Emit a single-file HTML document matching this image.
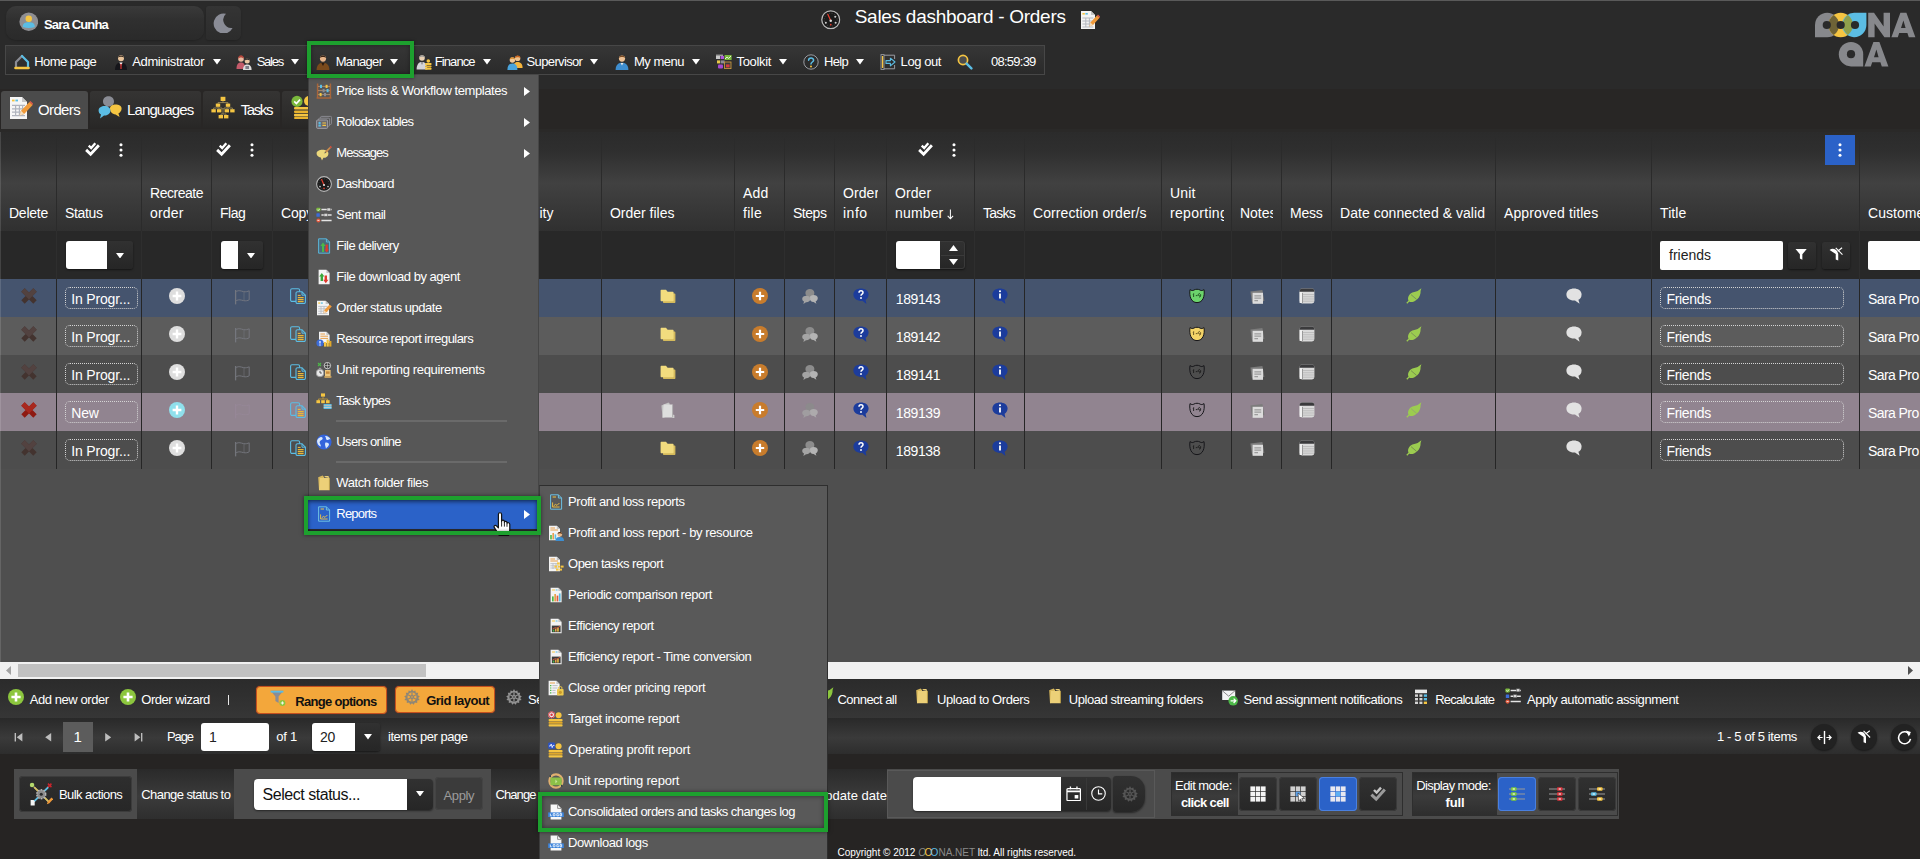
<!DOCTYPE html>
<html><head><meta charset="utf-8"><title>Sales dashboard - Orders</title>
<style>
html,body{margin:0;padding:0;}
body{width:1920px;height:859px;overflow:hidden;background:#2a2a2a;font-family:"Liberation Sans",sans-serif;position:relative;}
#r{position:absolute;left:0;top:0;width:1920px;height:859px;overflow:hidden;}
#r div,#r svg{position:absolute;}
#r div{box-sizing:border-box;}
</style></head><body>
<svg width="0" height="0" style="position:absolute"><defs><symbol id="i-home" viewBox="0 0 16 16"><path d="M2 14V8L8 2" fill="none" stroke="#8a8c94" stroke-width="2.2" stroke-linejoin="round" stroke-linecap="round"/><path d="M8 2L14 8V14" fill="none" stroke="#5bbde4" stroke-width="2.2" stroke-linejoin="round" stroke-linecap="round"/><path d="M1.5 14H14.5" stroke="#f5c542" stroke-width="2.6" stroke-linecap="round"/></symbol><symbol id="i-admin" viewBox="0 0 16 16"><circle cx="8" cy="4.2" r="3" fill="#e8c39a"/><path d="M5 3.6C5 1 11 1 11 3.6C10 2.6 6 2.6 5 3.6Z" fill="#2a2118"/><path d="M2 16C2 10 5 8.4 8 8.4S14 10 14 16Z" fill="#15151a"/><path d="M6.4 8.6L8 12L9.6 8.6Z" fill="#fff"/><path d="M7.6 10L8 15L8.4 10Z" stroke="#c33" stroke-width=".8"/></symbol><symbol id="i-sales" viewBox="0 0 16 16"><circle cx="5" cy="5" r="2.8" fill="#e8b9a0"/><path d="M2 5C2 0 8 0 8 5C7 3 3 3 2 5Z" fill="#b4463c"/><path d="M0.5 15C.5 10 2.5 8.6 5 8.6S9 10 9.5 15Z" fill="#c45a6a"/><circle cx="11.2" cy="7" r="2.5" fill="#ecc8a4"/><path d="M8.8 6.4C8.8 3.4 13.6 3.4 13.6 6.4C12.6 5.4 9.8 5.4 8.8 6.4Z" fill="#2c2c2c"/><path d="M7 16C7 11.6 9 10.4 11.2 10.4S15.6 11.6 15.6 16Z" fill="#dcdcdc"/><rect x="9.4" y="12" width="3.6" height="3" fill="#7c7c86"/></symbol><symbol id="i-manager" viewBox="0 0 16 16"><circle cx="8" cy="4.6" r="3.1" fill="#e6b48a"/><path d="M4.9 4C4.9 .6 11.1 .6 11.1 4C10 2.8 6 2.8 4.9 4Z" fill="#3a2416"/><path d="M1.6 16C1.6 10.4 5 8.8 8 8.8S14.4 10.4 14.4 16Z" fill="#7a4a1c"/><path d="M6.4 9L8 12L9.6 9Z" fill="#2a1a10"/></symbol><symbol id="i-finance" viewBox="0 0 16 16"><circle cx="6" cy="4" r="2.8" fill="#e9d0b2"/><path d="M3.2 3.4C3.2 .4 8.8 .4 8.8 3.4C7.8 2.4 4.2 2.4 3.2 3.4Z" fill="#9a9a9a"/><path d="M.6 15.6C.6 9.8 3.4 8 6 8S11 9.4 11.4 15.6Z" fill="#d4d4d8"/><path d="M5 8.2L6 11L7 8.2Z" fill="#777"/><rect x="9" y="9" width="6.6" height="2" rx=".8" fill="#f5c542"/><rect x="9" y="11.4" width="6.6" height="2" rx=".8" fill="#e8b32e"/><rect x="9" y="13.8" width="6.6" height="2" rx=".8" fill="#f5c542"/><circle cx="12.3" cy="7" r="1.8" fill="#f5c542"/></symbol><symbol id="i-super" viewBox="0 0 16 16"><circle cx="10.6" cy="4.4" r="2.7" fill="#edc28e"/><path d="M8 4C8 .8 13.4 .8 13.4 4C12.4 3 9 3 8 4Z" fill="#c8641e"/><path d="M6 14C6 9.4 8.4 8 10.6 8S15.6 9.4 15.6 14Z" fill="#f5b53c"/><circle cx="5.4" cy="6" r="2.7" fill="#f0c898"/><path d="M2.8 5.6C2.8 2.4 8 2.4 8 5.6C7 4.6 3.8 4.6 2.8 5.6Z" fill="#d88a28"/><path d="M.4 16C.4 11 2.8 9.6 5.4 9.6S10.4 11 10.4 16Z" fill="#4aa4dc"/></symbol><symbol id="i-mymenu" viewBox="0 0 16 16"><circle cx="8" cy="4.6" r="3.1" fill="#ecc094"/><path d="M4.9 4C4.9 .6 11.1 .6 11.1 4C10 2.8 6 2.8 4.9 4Z" fill="#7a4a22"/><path d="M1.6 16C1.6 10.4 5 8.8 8 8.8S14.4 10.4 14.4 16Z" fill="#3e8ed0"/><path d="M6.6 9L8 11.4L9.4 9Z" fill="#e8e8e8"/></symbol><symbol id="i-toolkit" viewBox="0 0 16 16"><rect x="0" y="2" width="4" height="3" fill="#c8c8c8"/><rect x="4.6" y="2" width="3.4" height="3" fill="#b05adc"/><rect x="8.6" y="1" width="7" height="5" fill="#7ab83c"/><path d="M9 5L11 3L12.6 4.4L15 2" stroke="#fff" stroke-width=".8" fill="none"/><rect x="1" y="6.4" width="3" height="3" fill="#e8c848"/><rect x="4.6" y="6.4" width="4" height="3" fill="#8c8c94"/><rect x="2" y="10.4" width="5" height="4" rx="1" fill="#a44ad0"/><rect x="8.6" y="8" width="6.4" height="6.6" fill="#3c3c3c" stroke="#d8a03c" stroke-width=".8"/><rect x="10" y="10.4" width="3.6" height="3" fill="#d43c3c"/><path d="M0 1.2H7" stroke="#dcdcdc" stroke-width=".9"/></symbol><symbol id="i-help" viewBox="0 0 16 16"><circle cx="8" cy="8" r="7.2" fill="#2c2c2c" stroke="#9a9ca2" stroke-width="1"/><path d="M5.6 6.2C5.6 3.2 10.6 3.2 10.6 6.2C10.6 8 8 8 8 10" fill="none" stroke="#5bbde4" stroke-width="1.5" stroke-linecap="round"/><circle cx="8" cy="12.4" r="1" fill="#f5c542"/></symbol><symbol id="i-logout" viewBox="0 0 16 16"><path d="M3 1.2H14.6V5M14.6 11V14.8H3" fill="none" stroke="#9a9ca2" stroke-width="1"/><rect x="1" y=".6" width="3" height="14.8" fill="#2c2c2c" stroke="#9a9ca2" stroke-width=".9"/><rect x="1.9" y="2" width="1.3" height="12" fill="#f5c542"/><path d="M6 6.6H10.4V4.2L15 8L10.4 11.8V9.4H6Z" fill="#2c2c2c" stroke="#5bbde4" stroke-width="1.1" stroke-linejoin="round"/></symbol><symbol id="i-search" viewBox="0 0 16 16"><circle cx="6" cy="6" r="4.6" fill="#4c4c4c" stroke="#f5c542" stroke-width="1.7"/><path d="M9.6 9.6L14.4 14.4" stroke="#5bbde4" stroke-width="2.4" stroke-linecap="round"/></symbol><symbol id="i-user" viewBox="0 0 20 20"><circle cx="10" cy="10" r="9.6" fill="#8e8e92"/><circle cx="10" cy="7" r="3.3" fill="#f5c542"/><path d="M3.8 15.4C3.8 11 6.6 10.4 10 10.4S16.2 11 16.2 15.4Q10 17.4 3.8 15.4Z" fill="#5bbde4"/></symbol><symbol id="i-moon" viewBox="0 0 20 20"><path d="M13 .8A10 10 0 1 0 19.6 15A8.2 8.2 0 0 1 13 .8Z" fill="#8a8c96"/></symbol><symbol id="i-dash" viewBox="0 0 20 20"><circle cx="10" cy="10" r="9.2" fill="#1a1a1a" stroke="#b8b8b8" stroke-width="1.3"/><circle cx="10" cy="10" r="6.6" fill="none" stroke="#555" stroke-width=".8" stroke-dasharray="1 1.6"/><path d="M10 11L7 4.4" stroke="#e03c2c" stroke-width="1.3" stroke-linecap="round"/><circle cx="10" cy="11" r="1.3" fill="#ddd"/><circle cx="5" cy="13" r="1" fill="#ccc"/><circle cx="15" cy="13" r="1" fill="#ccc"/><circle cx="14.6" cy="7" r="1" fill="#ccc"/><circle cx="10" cy="15" r=".9" fill="#e03c2c"/></symbol><symbol id="i-edit" viewBox="0 0 20 20"><path d="M1 1H11L15 5V19H1Z" fill="#f4f4f4"/><path d="M11 1V5H15Z" fill="#c4c4c4"/><rect x="2.4" y="3" width="2.4" height="1.6" fill="#f5c542"/><rect x="5.4" y="3" width="2.4" height="1.6" fill="#5bbde4"/><path d="M2.4 8H13.4M2.4 11H13.4M2.4 14H13.4M2.4 17H13.4M5.8 8V17M9.4 8V17" stroke="#b4b8c0" stroke-width="1"/><path d="M9.4 16.6L10.4 12.6L17 5.4L19.6 7.8L13 15Z" fill="#f09a3a"/><path d="M9.4 16.6L10.4 12.6L13 15Z" fill="#f4dcbc"/><path d="M17 5.4L18 4.4L20.4 6.8L19.6 7.8Z" fill="#e05c4c"/></symbol><symbol id="t-orders" viewBox="0 0 24 24"><path d="M1 1H13L18 6V23H1Z" fill="#f6f6f6"/><path d="M13 1V6H18Z" fill="#c8c8c8"/><rect x="3" y="3.6" width="2.6" height="1.8" fill="#f5c542"/><rect x="6.4" y="3.6" width="2.6" height="1.8" fill="#5bbde4"/><path d="M3 9.4H16M3 12.8H16M3 16.2H16M3 19.6H16M6.6 9.4V20M10.4 9.4V20M13.6 9.4V20" stroke="#b0b4be" stroke-width="1.2"/><path d="M10.6 19.6L12 14.8L20.4 6L23.6 9L15.2 18Z" fill="#f09a3a"/><path d="M10.6 19.6L12 14.8L15.2 18Z" fill="#f6e0c0"/><path d="M20.4 6L21.4 5L24 7.6L23.6 9Z" fill="#e05c4c"/></symbol><symbol id="t-lang" viewBox="0 0 24 24"><path d="M5 6.4C5 -.6 16 -.6 16 6.4C16 10 13 11.4 10.4 11.4L7 13.6L7.6 10.6C6 9.8 5 8.4 5 6.4Z" fill="#8a8c94"/><path d="M12 13.6C12 8.2 23.6 8.2 23.6 13.6C23.6 16 22 17.8 20.4 18.4L21.6 22L17.6 19.4C14 19.4 12 16.6 12 13.6Z" fill="#f5c542"/><path d="M.6 15.4C.6 9.4 12.4 9.4 12.4 15.4C12.4 19 9 20.6 6 20.4L2 23.6L3 19.6C1.4 18.6 .6 17.2 .6 15.4Z" fill="#5bbde4"/></symbol><symbol id="t-tasks" viewBox="0 0 24 24"><path d="M12 5V7M7 8V6.6H17V8M7 10.4V12M2.6 13.4V12H11V13.4M8 12V13.4M17 10.4V12M13 13.4V12H21.4V13.4M16 12V13.4M12 12V18M10 19.4V18H15V19.4" stroke="#9a8a5a" stroke-width=".9" fill="none"/><rect x="9.6" y=".8" width="4.8" height="4.2" fill="#f5c542"/><rect x="4.8" y="7.6" width="4.4" height="3.2" fill="#f5c542"/><rect x="14.8" y="7.6" width="4.4" height="3.2" fill="#f5c542"/><rect x=".4" y="13.2" width="4.4" height="3.2" fill="#f5c542"/><rect x="6" y="13.2" width="4.4" height="3.2" fill="#f5c542"/><rect x="13.6" y="13.2" width="4.4" height="3.2" fill="#f5c542"/><rect x="19.2" y="13.2" width="4.4" height="3.2" fill="#f5c542"/><rect x="7.6" y="19" width="4.4" height="3.4" fill="#f5c542"/><rect x="13" y="19" width="4.4" height="3.4" fill="#f5c542"/></symbol><symbol id="t-coins" viewBox="0 0 24 24"><circle cx="19" cy="6" r="5" fill="#f5c542"/><rect x="4" y="12" width="18" height="2.6" rx="1" fill="#f5c542"/><rect x="4" y="15.4" width="18" height="2.6" rx="1" fill="#e8b32e"/><rect x="4" y="18.8" width="18" height="2.6" rx="1" fill="#f5c542"/><rect x="4" y="22" width="18" height="2" rx="1" fill="#e8b32e"/><circle cx="7" cy="6.4" r="5.6" fill="#7ab83c"/><path d="M4.2 6.4L6.4 8.6L10 4.6" stroke="#fff" stroke-width="1.6" fill="none"/></symbol><symbol id="m-price" viewBox="0 0 16 16"><path d="M1.6 .6V15.4M14.4 .6V15.4M.6 15H15.4" stroke="#a8663a" stroke-width="1.5"/><path d="M2 3.4H14M2 7.6H14M2 11.6H14" stroke="#c8a078" stroke-width=".7"/><rect x="4" y="1.8" width="2" height="3.2" fill="#5bbde4"/><rect x="9.6" y="1.8" width="2" height="3.2" fill="#f5c542"/><rect x="6.6" y="6" width="2" height="3.2" fill="#8a8c94"/><rect x="10.6" y="6" width="2" height="3.2" fill="#5bbde4"/><rect x="3.6" y="10" width="2" height="3.2" fill="#f5c542"/><rect x="8" y="10" width="2" height="3.2" fill="#8a8c94"/></symbol><symbol id="m-rolodex" viewBox="0 0 16 16"><rect x="4.6" y="2.4" width="11" height="8" rx="1" fill="#575757" stroke="#8e8e96" stroke-width=".9"/><rect x="2.6" y="4.2" width="11" height="8" rx="1" fill="#575757" stroke="#8e8e96" stroke-width=".9"/><rect x=".6" y="6" width="11" height="8.4" rx="1" fill="#6a6a70" stroke="#a4a4ac" stroke-width=".9"/><circle cx="3.6" cy="9" r="1.2" fill="#5bbde4"/><rect x="2.4" y="10.6" width="2.4" height="2" fill="#5bbde4"/><path d="M6.4 9H10M6.4 11.4H10" stroke="#f5c542" stroke-width="1.1"/></symbol><symbol id="m-msg" viewBox="0 0 16 16"><path d="M.6 8.4C.6 3.4 12.4 3.4 12.4 8.4C12.4 11.4 9.6 13 7.4 12.8L6 15.6L4.8 12.4C2.2 11.8 .6 10.4 .6 8.4Z" fill="#ecd87c"/><path d="M9 6.6L13.6 2L14.8 3.2L10.2 7.8Z" fill="#c88a4c"/><path d="M13.6 2L14.6 .8L16 2.2L14.8 3.2Z" fill="#d8503c"/><path d="M9 6.6L8.4 8.4L10.2 7.8Z" fill="#555"/></symbol><symbol id="m-dash" viewBox="0 0 16 16"><circle cx="8" cy="8" r="7.4" fill="#1a1a1a" stroke="#b8b8b8" stroke-width="1.1"/><circle cx="8" cy="8" r="5.2" fill="none" stroke="#555" stroke-width=".7" stroke-dasharray="1 1.4"/><path d="M8 9L5.6 3.6" stroke="#e03c2c" stroke-width="1.2" stroke-linecap="round"/><circle cx="8" cy="9" r="1.1" fill="#ddd"/><circle cx="4" cy="10.6" r=".8" fill="#ccc"/><circle cx="12" cy="10.6" r=".8" fill="#ccc"/><circle cx="8" cy="12.4" r=".8" fill="#e03c2c"/></symbol><symbol id="m-sentmail" viewBox="0 0 16 16"><rect x=".4" y=".8" width="4" height="3.6" rx=".8" fill="#7ab83c"/><path d="M1.2 2.6L2.2 3.6L3.8 1.8" stroke="#fff" stroke-width=".8" fill="none"/><rect x=".4" y="6.2" width="3.4" height="3.6" rx=".6" fill="#3c6cd8"/><circle cx="2.4" cy="13.4" r="2" fill="#e0583c"/><path d="M1.4 13.4H3.4" stroke="#fff" stroke-width=".8"/><path d="M5.4 2.6H15.6M5.4 8H15.6M5.4 13.4H15.6" stroke="#e4e4e4" stroke-width="1.5"/><rect x="11" y="1" width="3.4" height="3" fill="#d8d8d8" stroke="#555" stroke-width=".5"/><rect x="8" y="6.4" width="3.4" height="3" fill="#d8d8d8" stroke="#555" stroke-width=".5"/></symbol><symbol id="m-filedeliv" viewBox="0 0 16 16"><path d="M2.6 .8H10.4L13.6 4V15.2H2.6Z" fill="#4a6a78" stroke="#5bbde4" stroke-width=".9"/><path d="M10.4 .8V4H13.6" fill="none" stroke="#5bbde4" stroke-width=".9"/><path d="M6 14V8H4.4L7 4.6L9.6 8H8V14Z" fill="#4cb848"/><path d="M9.6 6.6H11.8V11.6H13L10.7 14.6L8.4 11.6H9.6Z" fill="#e0392c"/></symbol><symbol id="m-filedl" viewBox="0 0 16 16"><path d="M2.6 .8H10.4L13.6 4V15.2H2.6Z" fill="#f4f4f4"/><path d="M10.4 .8V4H13.6Z" fill="#c4c4c4"/><path d="M4.6 12V7.4H3.2L5.8 4L8.4 7.4H7V12Z" fill="#3aa83a"/><path d="M8.6 6.6H11V10.8H12.4L9.8 14.2L7.2 10.8H8.6Z" fill="#e0392c"/></symbol><symbol id="m-orderstatus" viewBox="0 0 16 16"><path d="M1 .8H9.6L13 4V15.2H1Z" fill="#f4f4f4"/><path d="M9.6 .8V4H13Z" fill="#c4c4c4"/><rect x="2.2" y="2.4" width="2" height="1.3" fill="#f5c542"/><rect x="4.8" y="2.4" width="2" height="1.3" fill="#5bbde4"/><path d="M2.2 6.4H11.6M2.2 8.8H11.6M2.2 11.2H11.6M2.2 13.6H11.6M5 6.4V13.6M8 6.4V13.6" stroke="#b4b8c0" stroke-width=".8"/><path d="M7.4 13.4L8.2 10.2L13.6 4.4L15.8 6.4L10.4 12.2Z" fill="#f09a3a"/><path d="M7.4 13.4L8.2 10.2L10.4 12.2Z" fill="#f4dcbc"/></symbol><symbol id="m-resrep" viewBox="0 0 16 16"><path d="M3 .8H10.4L13.6 4V12H3Z" fill="#f4f4f4"/><path d="M10.4 .8V4H13.6Z" fill="#c4c4c4"/><path d="M4.4 3H9M4.4 5.2H12M4.4 7.4H12" stroke="#e8a04c" stroke-width="1"/><rect x="8" y="11" width="2.2" height="4.6" fill="#f5c542"/><rect x="10.6" y="8.6" width="2.2" height="7" fill="#f5c542"/><rect x="13.2" y="10" width="2.2" height="5.6" fill="#e0a82a"/><circle cx="4" cy="12" r="3.6" fill="#3c6cd8"/><path d="M4 10V12.6" stroke="#fff" stroke-width="1.2"/><circle cx="4" cy="14" r=".7" fill="#fff"/></symbol><symbol id="m-unitreq" viewBox="0 0 16 16"><circle cx="11.4" cy="3.6" r="3.2" fill="#3a3a3a" stroke="#e4e4e4" stroke-width=".8"/><path d="M8.4 3.6H14.4M11.4 .6V6.6" stroke="#e4e4e4" stroke-width=".6"/><path d="M2 1L5 4M5 1L2 4" stroke="#4cb848" stroke-width="1.1"/><circle cx="4" cy="11" r="3.8" fill="#e8e8e8" stroke="#9a9a9a" stroke-width=".9"/><path d="M4 8.8V11H5.8" stroke="#444" stroke-width=".9" fill="none"/><rect x="2.8" y="5.8" width="2.4" height="1.4" fill="#9a9a9a"/><rect x="9" y="8" width="5.6" height="7.6" fill="#f0c87c"/><rect x="10" y="9.4" width="3.6" height="2.4" fill="#c88a3c"/><rect x="8.4" y="14" width="7" height="1.8" fill="#c8a05c"/></symbol><symbol id="m-tasktypes" viewBox="0 0 16 16"><path d="M7 3.4V6M2.4 8V6H11.6V8" stroke="#c8a038" stroke-width=".8" fill="none"/><rect x="5" y=".4" width="4" height="3.2" fill="#f5c542"/><rect x=".4" y="7.2" width="3.6" height="3" fill="#f5c542"/><rect x="5.2" y="7.2" width="3.6" height="3" fill="#f5c542"/><rect x="10" y="7.2" width="3.6" height="3" fill="#f5c542"/><path d="M7.6 11.6H15.6M7.6 13.6H15.6M7.6 15.4H15.6" stroke="#5bbde4" stroke-width="1.3"/><path d="M7.6 12.6H15.6M7.6 14.5H15.6" stroke="#e8e8e8" stroke-width=".7"/></symbol><symbol id="m-users" viewBox="0 0 16 16"><circle cx="8" cy="8" r="7.6" fill="#3464dc"/><path d="M3 4C5 2 7 3 6.6 5C6 6.6 4 6 3.6 8C3.4 9.6 5 10.4 5 12.6C3 12 1 10 1 7C1.4 5.6 2 4.8 3 4Z" fill="#d8e8fc"/><path d="M9 2C11 1.6 13.6 3 14.6 5.4C13 5 12.4 6.4 11 6C9.6 5.6 10.4 3.6 9 2Z" fill="#d8e8fc"/><path d="M9.4 8.6C11 8 13 9 13 10.6C12.6 12.4 11 13.4 10 14.6C9.6 12.6 8.4 10.4 9.4 8.6Z" fill="#d8e8fc"/></symbol><symbol id="m-watch" viewBox="0 0 16 16"><path d="M2.2 2.2L6.6 .6L8 2V13L3 15.2Z" fill="#d8b85c"/><path d="M4 3H13.4V15.2H3Z" fill="#ecd078"/><path d="M8 2L9.4 1H12.4L13.4 3" fill="#ecd078"/><path d="M13.4 3V15.2" stroke="#c8a848" stroke-width=".8"/></symbol><symbol id="m-reports" viewBox="0 0 16 16"><path d="M2.6 .8H10.4L13.6 4V15.2H2.6Z" fill="none" stroke="#6cc0e4" stroke-width="1"/><path d="M10.4 .8V4H13.6" fill="none" stroke="#6cc0e4" stroke-width="1"/><path d="M4.6 3H8" stroke="#f5c542" stroke-width="1"/><path d="M4.6 8.4V13H11.6" stroke="#f5c542" stroke-width=".9" fill="none"/><path d="M5.6 12L7.4 10.4L9 11.4L11.4 9" stroke="#f5c542" stroke-width=".9" fill="none"/></symbol><symbol id="s-pl" viewBox="0 0 16 16"><path d="M2.6 .8H10.4L13.6 4V15.2H2.6Z" fill="none" stroke="#6cc0e4" stroke-width="1"/><path d="M10.4 .8V4H13.6" fill="none" stroke="#6cc0e4" stroke-width="1"/><path d="M4.6 3H8" stroke="#f5c542" stroke-width="1"/><path d="M4.6 8.4V13H11.6" stroke="#f5c542" stroke-width=".9" fill="none"/><path d="M5.6 12L7.4 10.4L9 11.4L11.4 9" stroke="#f5c542" stroke-width=".9" fill="none"/></symbol><symbol id="s-plres" viewBox="0 0 16 16"><path d="M1 .8H8.8L12 4V15.2H1Z" fill="#f4f4f4"/><path d="M8.8 .8V4H12Z" fill="#c4c4c4"/><path d="M2.4 3H7M2.4 5H10" stroke="#e8a04c" stroke-width="1"/><rect x="2.2" y="10" width="1.6" height="4.4" fill="#4cb848"/><rect x="4.4" y="8" width="1.6" height="6.4" fill="#e8a04c"/><rect x="6.6" y="9.4" width="1.6" height="5" fill="#5bbde4"/><circle cx="11.8" cy="9.4" r="2.3" fill="#e8b88a"/><path d="M9.6 9C9.6 6.4 14 6.4 14 9C13 8 10.6 8 9.6 9Z" fill="#5a3418"/><path d="M7.6 16C7.6 12.6 9.6 12 11.8 12S16 12.6 16 16Z" fill="#3e8ed0"/></symbol><symbol id="s-open" viewBox="0 0 16 16"><path d="M1 .8H8.8L12 4V15.2H1Z" fill="#f4f4f4"/><path d="M8.8 .8V4H12Z" fill="#c4c4c4"/><path d="M2.4 3H7M2.4 5H10" stroke="#e8a04c" stroke-width="1"/><path d="M2.4 7.6H10.6M2.4 9.8H10.6M2.4 12H10.6M5 7.6V13M8 7.6V13" stroke="#b4b8c0" stroke-width=".8"/><rect x="9" y="6.4" width="2.8" height="2.2" fill="#f5c542"/><rect x="6.4" y="9.6" width="2.6" height="2" fill="#f5c542"/><rect x="9.8" y="9.6" width="2.6" height="2" fill="#f5c542"/><rect x="13" y="9.6" width="2.6" height="2" fill="#f5c542"/><rect x="8" y="12.6" width="2.6" height="2" fill="#f5c542"/><rect x="11.4" y="12.6" width="2.6" height="2" fill="#f5c542"/></symbol><symbol id="s-periodic" viewBox="0 0 16 16"><path d="M2.6 .8H10.4L13.6 4V15.2H2.6Z" fill="#f4f4f4"/><path d="M10.4 .8V4H13.6Z" fill="#c4c4c4"/><path d="M4 3H7" stroke="#f5c542" stroke-width="1"/><path d="M7.6 3H9.6" stroke="#5bbde4" stroke-width="1"/><rect x="4" y="9.4" width="1.7" height="5" fill="#4cb848"/><rect x="6.3" y="7" width="1.7" height="7.4" fill="#e8a04c"/><rect x="8.6" y="8.6" width="1.7" height="5.8" fill="#e0583c"/><rect x="10.9" y="6.4" width="1.7" height="8" fill="#5bbde4"/></symbol><symbol id="s-eff" viewBox="0 0 16 16"><path d="M2.6 .8H10.4L13.6 4V15.2H2.6Z" fill="#f4f4f4"/><path d="M10.4 .8V4H13.6Z" fill="#c4c4c4"/><path d="M4 3H7" stroke="#f5c542" stroke-width="1"/><path d="M7.6 3H9.6" stroke="#5bbde4" stroke-width="1"/><rect x="3.8" y="7.6" width="8.8" height="6.6" fill="#3c3c3c"/><rect x="4.8" y="11.6" width="1.5" height="2" fill="#4cb848"/><rect x="7" y="10.6" width="1.5" height="3" fill="#e8a04c"/><rect x="9.2" y="9.6" width="1.5" height="4" fill="#f5c542"/><path d="M4.6 11L7.4 9.6L9 10.2L12 8.2" stroke="#e0583c" stroke-width=".8" fill="none"/></symbol><symbol id="s-close" viewBox="0 0 16 16"><path d="M.6 .8H8.4L11.6 4V15.2H.6Z" fill="#f4f4f4"/><path d="M8.4 .8V4H11.6Z" fill="#c4c4c4"/><path d="M2 3H7" stroke="#e8a04c" stroke-width="1"/><path d="M2 5.6H3.4M2 8H3.4M2 10.4H3.4M2 12.8H3.4" stroke="#4cb848" stroke-width="1.2"/><path d="M4.4 5.6H9.6M4.4 8H9.6M4.4 10.4H7.6M4.4 12.8H7.6" stroke="#b4b8c0" stroke-width=".9"/><rect x="9" y="9" width="6.6" height="6.6" rx=".8" fill="#ecc84c"/><circle cx="12.3" cy="12.3" r="1.6" fill="#c89a2c"/><rect x="10.6" y="6.6" width="3.4" height="3" rx="1.4" fill="none" stroke="#ecc84c" stroke-width="1"/></symbol><symbol id="s-target" viewBox="0 0 16 16"><rect x=".6" y="8" width="14" height="2.2" rx=".9" fill="#f5c542"/><rect x=".6" y="10.6" width="14" height="2.2" rx=".9" fill="#e0a82a"/><rect x=".6" y="13.2" width="14" height="2.2" rx=".9" fill="#f5c542"/><circle cx="10.6" cy="4.2" r="3" fill="#f5c542"/><circle cx="3.6" cy="3.8" r="3.4" fill="#e8e8e8"/><circle cx="3.6" cy="3.8" r="3" fill="none" stroke="#d8343c" stroke-width="1"/><circle cx="3.6" cy="3.8" r="1.2" fill="#d8343c"/></symbol><symbol id="s-oper" viewBox="0 0 16 16"><rect x=".6" y="8" width="14" height="2.2" rx=".9" fill="#f5c542"/><rect x=".6" y="10.6" width="14" height="2.2" rx=".9" fill="#e0a82a"/><rect x=".6" y="13.2" width="14" height="2.2" rx=".9" fill="#f5c542"/><circle cx="10.6" cy="4.2" r="3" fill="#f5c542"/><rect x=".2" y=".6" width="6.8" height="6.2" rx="1" fill="#2c54c8"/><path d="M1 4H2.4L3.2 2L4.2 5.6L5 3.4H6.4" stroke="#fff" stroke-width=".8" fill="none"/></symbol><symbol id="s-unit" viewBox="0 0 16 16"><circle cx="8" cy="8" r="6.6" fill="none" stroke="#e0b070" stroke-width="2.2"/><rect x="2.4" y="4.6" width="11.2" height="7.6" rx="1" fill="#8cc048"/><path d="M7.4 6.4V10.4L9.4 8.4Z" fill="#c8e49c"/><path d="M1 3L3 2L3 4.4ZM15 13L13 14L13 11.6Z" fill="#2c3c4c"/></symbol><symbol id="s-log" viewBox="0 0 16 16"><path d="M2.6 .6H9.6L13.4 4.4V15.4H2.6Z" fill="#f8f8f8"/><path d="M9.6 .6V4.4H13.4" fill="none" stroke="#888" stroke-width=".9"/><rect x=".2" y="8.4" width="15.6" height="4.6" fill="#3c84dc"/><path d="M2.4 9.6V11.8H3.8M5.2 9.6H7V11.8H5.2ZM10.6 9.6H8.8V11.8H10.6V10.8H9.8" stroke="#fff" stroke-width=".8" fill="none"/><path d="M12 9.6H13.6V11.8H12Z" stroke="#fff" stroke-width=".8" fill="none"/></symbol><symbol id="r-x" viewBox="0 0 16 16"><path d="M2 2L14 14M14 2L2 14" stroke="#43332f" stroke-width="4.8"/><path d="M2 2L8 8L14 2" stroke="#524240" stroke-width="4.8" fill="none"/></symbol><symbol id="r-xred" viewBox="0 0 16 16"><path d="M2 2L14 14M14 2L2 14" stroke="#8e1a12" stroke-width="4.8"/><path d="M2 2L8 8L14 2" stroke="#a8281e" stroke-width="4.8" fill="none"/></symbol><symbol id="r-plus" viewBox="0 0 16 16"><circle cx="8" cy="8" r="8" fill="#dedede"/><path d="M8 3.6V12.4M3.6 8H12.4" stroke="#fff" stroke-width="2.4"/></symbol><symbol id="r-plusb" viewBox="0 0 16 16"><circle cx="8" cy="8" r="8" fill="#8fe0ec"/><path d="M8 3.6V12.4M3.6 8H12.4" stroke="#fff" stroke-width="2.4"/></symbol><symbol id="r-flag" viewBox="0 0 16 16"><path d="M1.6 1V15.4" stroke="#7a7c84" stroke-width="1.3"/><path d="M2.2 2.4C5 1 7 2 9.4 2.6C12 3.2 13.6 2.4 15.2 1.8V10.8C13.6 11.6 12 12.2 9.4 11.6C7 11 5 10.2 2.2 11.6" fill="none" stroke="#7a7c84" stroke-width="1"/><path d="M10 3V11.6" stroke="#7a7c84" stroke-width=".6"/></symbol><symbol id="r-flagm" viewBox="0 0 16 16"><path d="M1.6 1V15.4" stroke="#98899a" stroke-width="1.3"/><path d="M2.2 2.4C5 1 7 2 9.4 2.6C12 3.2 13.6 2.4 15.2 1.8V10.8C13.6 11.6 12 12.2 9.4 11.6C7 11 5 10.2 2.2 11.6" fill="none" stroke="#98899a" stroke-width="1"/></symbol><symbol id="r-copy" viewBox="0 0 16 16"><rect x=".6" y=".8" width="9" height="12.6" rx="1.4" fill="none" stroke="#5bbde4" stroke-width="1.1"/><path d="M6 5.4C6 4.4 6.6 3.8 7.6 3.8H12L15.4 7.2V14C15.4 15 14.8 15.6 13.8 15.6H7.6C6.6 15.6 6 15 6 14Z" fill="#44536e" stroke="#5bbde4" stroke-width="1.1"/><path d="M12 3.8V7.2H15.4" fill="none" stroke="#5bbde4" stroke-width="1"/><path d="M7.8 7.4H10.6" stroke="#f0c040" stroke-width="1"/><path d="M7.8 9.5H13.6M7.8 11.6H13.6M7.8 13.7H13.6" stroke="#e8b838" stroke-width="1.25"/></symbol><symbol id="r-folder" viewBox="0 0 16 16"><path d="M3 4.4H14.4C15 4.4 15.4 4.8 15.4 5.4V13C15.4 13.6 15 14 14.4 14H4C3.4 14 3 13.6 3 13Z" fill="#d4ba5c"/><path d="M.6 1.8C.6 1.2 1 .8 1.6 .8H6L7.6 2.8H12.6C13.2 2.8 13.6 3.2 13.6 3.8V11.2C13.6 11.8 13.2 12.2 12.6 12.2H1.6C1 12.2 .6 11.8 .6 11.2Z" fill="#f2dc7e"/></symbol><symbol id="r-folderg" viewBox="0 0 16 16"><path d="M1.4 3.4L8.4 .4L9.6 1.6V13.4L2.6 16Z" fill="#c4c4c4"/><path d="M3.6 2.6H12.6V15.4H2.6Z" fill="#dedede"/><path d="M12.6 12.4L14.4 13V16H12Z" fill="#d0d0d0"/><path d="M12.6 2.6V15.6" stroke="#a8a8a8" stroke-width=".8"/></symbol><symbol id="r-add" viewBox="0 0 16 16"><circle cx="8" cy="8" r="8" fill="#c87c2c"/><path d="M8 3.8V12.2M3.8 8H12.2" stroke="#fff" stroke-width="2.2"/></symbol><symbol id="r-steps" viewBox="0 0 16 16"><path d="M3.4 5C3.4 -.4 12.4 -.4 12.4 5C12.4 7.6 10.4 9 8 9L5.4 10.6L5.8 8.6C4.4 8 3.4 6.6 3.4 5Z" fill="#8c8c8c"/><path d="M7.6 10C7.6 6 15.8 6 15.8 10C15.8 11.8 14.6 13 13.6 13.4L14.4 15.8L11.6 14C9 14 7.6 12 7.6 10Z" fill="#b4b4b4"/><path d="M.2 10.8C.2 6.6 8.4 6.6 8.4 10.8C8.4 13.2 6.2 14.4 4 14.2L1.4 16L2 13.6C.8 13 .2 12 .2 10.8Z" fill="#a4a4a4"/></symbol><symbol id="r-q" viewBox="0 0 16 16"><path d="M.4 6.6C.4 -1.4 15.6 -1.4 15.6 6.6C15.6 9.2 14 11 12.6 11.8L13.4 16L9.4 12.8C4 13.4 .4 10.4 .4 6.6Z" fill="#1c3c9c"/><path d="M6 4.8C6 2.2 10 2.2 10 4.8C10 6.2 8 6.2 8 7.8" fill="none" stroke="#fff" stroke-width="1.5"/><circle cx="8" cy="10" r=".95" fill="#fff"/></symbol><symbol id="r-i" viewBox="0 0 16 16"><path d="M.4 6.6C.4 -1.4 15.6 -1.4 15.6 6.6C15.6 9.2 14 11 12.6 11.8L13.4 16L9.4 12.8C4 13.4 .4 10.4 .4 6.6Z" fill="#1c3c9c"/><path d="M8 5.4V10.6" stroke="#fff" stroke-width="1.8"/><circle cx="8" cy="3.2" r="1.05" fill="#fff"/></symbol><symbol id="r-catg" viewBox="0 0 16 16"><path d="M1 1.6C2.6 2.8 4 2.8 5 2C7 1 9 1 11 2C12 2.8 13.4 2.8 15 1.6C16 8 14 14.6 8 14.6S0 8 1 1.6Z" fill="#6cd46c" stroke="#16161a" stroke-width="1"/><path d="M4.6 5.6V9M4 6.2L4.6 5.6M6.8 7.6H8.6M11 5.8A1.1 1.1 0 1 0 11 7.6M11.6 6.2V8C11.6 9 10.4 9.2 10 8.8" stroke="#1c4c1c" stroke-width=".9" fill="none"/></symbol><symbol id="r-caty" viewBox="0 0 16 16"><path d="M1 1.6C2.6 2.8 4 2.8 5 2C7 1 9 1 11 2C12 2.8 13.4 2.8 15 1.6C16 8 14 14.6 8 14.6S0 8 1 1.6Z" fill="#f4d468" stroke="#16161a" stroke-width="1"/><path d="M4.6 5.6V9M4 6.2L4.6 5.6M6.8 7.6H8.6M11 5.8A1.1 1.1 0 1 0 11 7.6M11.6 6.2V8C11.6 9 10.4 9.2 10 8.8" stroke="#5c4c1c" stroke-width=".9" fill="none"/></symbol><symbol id="r-cat0" viewBox="0 0 16 16"><path d="M1 1.6C2.6 2.8 4 2.8 5 2C7 1 9 1 11 2C12 2.8 13.4 2.8 15 1.6C16 8 14 14.6 8 14.6S0 8 1 1.6Z" fill="none" stroke="#16161a" stroke-width="1"/><path d="M4.6 5.6V9M4 6.2L4.6 5.6M6.8 7.6H8.6M11 5.8A1.1 1.1 0 1 0 11 7.6M11.6 6.2V8C11.6 9 10.4 9.2 10 8.8" stroke="#1c1c1c" stroke-width=".9" fill="none"/></symbol><symbol id="r-note" viewBox="0 0 16 16"><path d="M1.4 2.4L13.4 1L15.4 12L3 13.6Z" fill="#7c7c7c"/><rect x="3.6" y="3.8" width="10.4" height="11" fill="#dcdcdc"/><path d="M5.4 6.8H12.2M5.4 9.2H12.2M5.4 11.6H9" stroke="#9c9c9c" stroke-width="1.2"/></symbol><symbol id="r-mess" viewBox="0 0 16 16"><rect x=".6" y=".4" width="14.8" height="15" rx="2.4" fill="#dadada"/><path d="M.6 3.8V2.8C.6 1.4 1.6 .4 3 .4H13C14.4 .4 15.4 1.4 15.4 2.8V3.8Z" fill="#3a3a3c"/><path d="M3.4 5V15" stroke="#8a8a8a" stroke-width=".9"/><path d="M4 6.6H15M4 8.8H15M4 11H15M4 13.2H15" stroke="#b8b8b8" stroke-width=".9"/><rect x=".6" y="4" width="2.4" height="11" fill="#f0f0f0"/></symbol><symbol id="r-leaf" viewBox="0 0 16 16"><path d="M.8 15.2L3.6 12.4" stroke="#9ccc50" stroke-width="1.3"/><path d="M3.2 13.4C.8 11 2.4 6.4 6.4 4.6C9 3.4 11.4 3.6 13 2L15.4 .2L14.6 3C14.8 6 13.6 9.4 11 11.4C8.4 13.6 5 15 3.2 13.4Z" fill="#9ccc50"/><path d="M5 6.6L10.6 11.4" stroke="#44536e" stroke-width=".9" opacity=".5"/></symbol><symbol id="r-bubble" viewBox="0 0 16 16"><path d="M.4 6.4C.4 -1.6 15.6 -1.6 15.6 6.4C15.6 9.6 13.6 11.4 12.4 11.8L13.6 15.8L9 12.4C4 12.8 .4 10.2 .4 6.4Z" fill="#e2e2e2"/></symbol><symbol id="b-addg" viewBox="0 0 16 16"><circle cx="8" cy="8" r="8" fill="#8cc63e"/><path d="M8 3.4V12.6M3.4 8H12.6" stroke="#fff" stroke-width="2.6"/></symbol><symbol id="b-funnel" viewBox="0 0 16 16"><path d="M.6 .8H13.4L8.6 6.6V13L5.4 11V6.6Z" fill="#8a8c94"/><path d="M.6 .8H13.4V2.6H.6Z" fill="#5bbde4"/><circle cx="12.4" cy="13" r="3" fill="#8cc63e"/><path d="M12.4 11.4V14.6M10.8 13H14" stroke="#fff" stroke-width=".9"/></symbol><symbol id="b-gear" viewBox="0 0 16 16"><path d="M8 0L9.2 2.2L11.4 1.4L11.8 3.8L14.2 3.8L13.6 6.2L15.8 7.2L14.2 9L15.6 11L13.2 11.6L13.2 14L10.8 13.6L9.8 15.8L8 14.2L6.2 15.8L5.2 13.6L2.8 14L2.8 11.6L.4 11L1.8 9L.2 7.2L2.4 6.2L1.8 3.8L4.2 3.8L4.6 1.4L6.8 2.2Z" fill="#929292"/><circle cx="8" cy="8" r="4.5" fill="#303030"/><path d="M8 3.4V12.6M4 5.7L12 10.3M12 5.7L4 10.3" stroke="#929292" stroke-width="1.25"/><circle cx="8" cy="8" r="1.9" fill="#929292"/><circle cx="8" cy="8" r=".8" fill="#303030"/></symbol><symbol id="b-gearo" viewBox="0 0 16 16"><path d="M8 0L9.2 2.2L11.4 1.4L11.8 3.8L14.2 3.8L13.6 6.2L15.8 7.2L14.2 9L15.6 11L13.2 11.6L13.2 14L10.8 13.6L9.8 15.8L8 14.2L6.2 15.8L5.2 13.6L2.8 14L2.8 11.6L.4 11L1.8 9L.2 7.2L2.4 6.2L1.8 3.8L4.2 3.8L4.6 1.4L6.8 2.2Z" fill="#8e8676"/><circle cx="8" cy="8" r="4.5" fill="#f3a73b"/><path d="M8 3.4V12.6M4 5.7L12 10.3M12 5.7L4 10.3" stroke="#8e8676" stroke-width="1.25"/><circle cx="8" cy="8" r="1.9" fill="#8e8676"/><circle cx="8" cy="8" r=".8" fill="#f3a73b"/></symbol><symbol id="b-geard" viewBox="0 0 16 16"><path d="M8 0L9.2 2.2L11.4 1.4L11.8 3.8L14.2 3.8L13.6 6.2L15.8 7.2L14.2 9L15.6 11L13.2 11.6L13.2 14L10.8 13.6L9.8 15.8L8 14.2L6.2 15.8L5.2 13.6L2.8 14L2.8 11.6L.4 11L1.8 9L.2 7.2L2.4 6.2L1.8 3.8L4.2 3.8L4.6 1.4L6.8 2.2Z" fill="#565656"/><circle cx="8" cy="8" r="4.5" fill="#2b2b2b"/><path d="M8 3.4V12.6M4 5.7L12 10.3M12 5.7L4 10.3" stroke="#565656" stroke-width="1.25"/><circle cx="8" cy="8" r="1.9" fill="#565656"/><circle cx="8" cy="8" r=".8" fill="#2b2b2b"/></symbol><symbol id="b-leaf" viewBox="0 0 16 16"><path d="M.8 15.2L3.6 12.4" stroke="#8cc63e" stroke-width="1.3"/><path d="M3.2 13.4C.8 11 2.4 6.4 6.4 4.6C9 3.4 11.4 3.6 13 2L15.4 .2L14.6 3C14.8 6 13.6 9.4 11 11.4C8.4 13.6 5 15 3.2 13.4Z" fill="#8cc63e"/></symbol><symbol id="b-folder" viewBox="0 0 16 16"><path d="M2.2 2.2L6.6 .6L8 2V13L3 15.2Z" fill="#d8b85c"/><path d="M4 3H13.4V15.2H3Z" fill="#ecd078"/><path d="M8 2L9.4 1H12.4L13.4 3" fill="#ecd078"/><path d="M13.4 3V15.2" stroke="#c8a848" stroke-width=".8"/></symbol><symbol id="b-mail" viewBox="0 0 16 16"><rect x=".2" y=".6" width="13" height="9.4" fill="#f4f4f4"/><path d="M.2 .6L6.7 6.2L13.2 .6" fill="none" stroke="#8a8a8a" stroke-width="1"/><circle cx="11.2" cy="10.8" r="4.8" fill="#4cb848"/><path d="M8.6 10.8H13.6M11.6 8.6L13.8 10.8L11.6 13" stroke="#fff" stroke-width="1.3" fill="none"/></symbol><symbol id="b-calc" viewBox="0 0 16 16"><rect x="2" y=".6" width="12" height="3.6" fill="#e8e8e8"/><g fill="#d4d4d4"><rect x="2" y="5.4" width="3" height="2.4"/><rect x="6.4" y="5.4" width="3" height="2.4"/><rect x="2" y="9" width="3" height="2.4"/><rect x="6.4" y="9" width="3" height="2.4"/><rect x="2" y="12.6" width="3" height="2.4"/><rect x="6.4" y="12.6" width="3" height="2.4"/></g><g fill="#5bbde4"><rect x="10.8" y="5.4" width="3.2" height="2.4"/><rect x="10.8" y="9" width="3.2" height="2.4"/></g><rect x="10.8" y="12.6" width="3.2" height="2.4" fill="#f5c542"/></symbol><symbol id="b-auto" viewBox="0 0 16 16"><rect x=".4" y=".4" width="4.4" height="4" rx=".8" fill="#7ab83c"/><path d="M1.4 2.4L2.4 3.4L4 1.6" stroke="#fff" stroke-width=".8" fill="none"/><rect x=".8" y="6.4" width="3.4" height="3.6" rx=".6" fill="#3c6cd8"/><circle cx="2.6" cy="13.6" r="2.1" fill="#e0583c"/><path d="M1.6 13.6H3.6" stroke="#fff" stroke-width=".8"/><path d="M5.6 2.4H15.8M5.6 8.2H15.8M5.6 13.6H15.8" stroke="#e4e4e4" stroke-width="1.5"/><rect x="11.4" y=".8" width="3.4" height="3" fill="#d8d8d8" stroke="#555" stroke-width=".5"/><rect x="8.4" y="6.6" width="3.4" height="3" fill="#d8d8d8" stroke="#555" stroke-width=".5"/></symbol><symbol id="b-bulk" viewBox="0 0 24 24"><path d="M5 5L19 19M19 5L5 19" stroke="#9ca0a8" stroke-width="1.4"/><path d="M5 5L9 9" stroke="#d8c060" stroke-width="1.6"/><path d="M15 9L19 5" stroke="#5bbde4" stroke-width="1.6"/><path d="M5 19L9 15" stroke="#5bbde4" stroke-width="1.6"/><path d="M15 15L19 19" stroke="#d8c060" stroke-width="1.6"/><circle cx="12" cy="12" r="4.4" fill="#8c8c8c"/><circle cx="12" cy="12" r="4.4" fill="none" stroke="#b8b8b8" stroke-width="1.4" stroke-dasharray="1.6 1.2"/><circle cx="12" cy="12" r="1.5" fill="#2c2c2c"/><circle cx="3" cy="3" r="2.2" fill="#b4d86c"/><path d="M18.6 1.6L22 5M22 1.6L18.6 5" stroke="#c8242c" stroke-width="1.5"/><path d="M1.6 17.6H4.6L5.6 19V23H1.6Z" fill="#f4f4f4"/><path d="M17.4 21.8L18.4 19L22 15.2L23.6 16.8L20 20.8Z" fill="#f09a3a"/></symbol><symbol id="b-cal" viewBox="0 0 16 16"><rect x="1" y="2.6" width="14" height="12.6" rx="1" fill="none" stroke="#fff" stroke-width="1.3"/><path d="M1 5.6H15" stroke="#fff" stroke-width="1.6"/><path d="M4.6 .6V3.4M11.4 .6V3.4" stroke="#fff" stroke-width="1.4"/><rect x="9" y="9.4" width="3.8" height="3.6" fill="#fff"/></symbol><symbol id="b-clock" viewBox="0 0 16 16"><circle cx="8" cy="8" r="7.2" fill="none" stroke="#fff" stroke-width="1.2"/><path d="M8 3.8V8.4H12" fill="none" stroke="#fff" stroke-width="1.2"/></symbol><symbol id="b-grid1" viewBox="0 0 16 16"><rect x="0.4" y="0.4" width="4.6" height="4.6" fill="#f4f4f4"/><rect x="0.4" y="5.7" width="4.6" height="4.6" fill="#f4f4f4"/><rect x="0.4" y="11" width="4.6" height="4.6" fill="#f4f4f4"/><rect x="5.7" y="0.4" width="4.6" height="4.6" fill="#f4f4f4"/><rect x="5.7" y="5.7" width="4.6" height="4.6" fill="#f4f4f4"/><rect x="5.7" y="11" width="4.6" height="4.6" fill="#f4f4f4"/><rect x="11" y="0.4" width="4.6" height="4.6" fill="#f4f4f4"/><rect x="11" y="5.7" width="4.6" height="4.6" fill="#f4f4f4"/><rect x="11" y="11" width="4.6" height="4.6" fill="#f4f4f4"/></symbol><symbol id="b-grid2" viewBox="0 0 16 16"><rect x="0.4" y="0.4" width="4.6" height="4.6" fill="#d0d0d0"/><rect x="0.4" y="5.7" width="4.6" height="4.6" fill="#d0d0d0"/><rect x="0.4" y="11" width="4.6" height="4.6" fill="#d0d0d0"/><rect x="5.7" y="0.4" width="4.6" height="4.6" fill="#d0d0d0"/><rect x="5.7" y="5.7" width="4.6" height="4.6" fill="#d0d0d0"/><rect x="5.7" y="11" width="4.6" height="4.6" fill="#d0d0d0"/><rect x="11" y="0.4" width="4.6" height="4.6" fill="#d0d0d0"/><rect x="11" y="5.7" width="4.6" height="4.6" fill="#d0d0d0"/><rect x="11" y="11" width="4.6" height="4.6" fill="#d0d0d0"/><rect x="5.7" y="5.7" width="4.6" height="4.6" fill="#5ca0e8"/><path d="M8 7L14.6 12.4L11.8 12.6L13.4 15.6L12 16.2L10.6 13.2L8.6 15Z" fill="#fff" stroke="#333" stroke-width=".7"/></symbol><symbol id="b-grid3" viewBox="0 0 16 16"><rect x="0.4" y="0.4" width="4.6" height="4.6" fill="#e8e8f0"/><rect x="0.4" y="5.7" width="4.6" height="4.6" fill="#e8e8f0"/><rect x="0.4" y="11" width="4.6" height="4.6" fill="#e8e8f0"/><rect x="5.7" y="0.4" width="4.6" height="4.6" fill="#e8e8f0"/><rect x="5.7" y="5.7" width="4.6" height="4.6" fill="#e8e8f0"/><rect x="5.7" y="11" width="4.6" height="4.6" fill="#e8e8f0"/><rect x="11" y="0.4" width="4.6" height="4.6" fill="#e8e8f0"/><rect x="11" y="5.7" width="4.6" height="4.6" fill="#e8e8f0"/><rect x="11" y="11" width="4.6" height="4.6" fill="#e8e8f0"/><rect x="5.7" y="5.7" width="4.6" height="4.6" fill="#5cb0f4"/></symbol><symbol id="b-check" viewBox="0 0 16 16"><path d="M1.4 8.6L6.2 13.2L14.8 3.6" stroke="#9a9a9a" stroke-width="3" fill="none"/><path d="M4 4L6.6 6.6L11 1.6" stroke="#c4c4c4" stroke-width="2.4" fill="none"/></symbol><symbol id="b-disp1" viewBox="0 0 16 16"><path d="M0 3H16M0 8H16M0 13H16" stroke="#9a9a9a" stroke-width="1.1"/><rect x="2" y="1.2" width="5.6" height="3.6" rx="1" fill="#7cc83c"/><rect x="3.7" y="2.1" width="2.2" height="1.8" fill="#fff" opacity=".6"/><rect x="2" y="6.2" width="5.6" height="3.6" rx="1" fill="#7cc83c"/><rect x="3.7" y="7.1" width="2.2" height="1.8" fill="#fff" opacity=".6"/><rect x="2" y="11.2" width="5.6" height="3.6" rx="1" fill="#7cc83c"/><rect x="3.7" y="12.1" width="2.2" height="1.8" fill="#fff" opacity=".6"/></symbol><symbol id="b-disp2" viewBox="0 0 16 16"><path d="M0 3H16M0 8H16M0 13H16" stroke="#9a9a9a" stroke-width="1.1"/><rect x="8" y="1.2" width="5.6" height="3.6" rx="1" fill="#d8343c"/><rect x="9.7" y="2.1" width="2.2" height="1.8" fill="#fff" opacity=".6"/><rect x="8" y="6.2" width="5.6" height="3.6" rx="1" fill="#d8343c"/><rect x="9.7" y="7.1" width="2.2" height="1.8" fill="#fff" opacity=".6"/><rect x="8" y="11.2" width="5.6" height="3.6" rx="1" fill="#d8343c"/><rect x="9.7" y="12.1" width="2.2" height="1.8" fill="#fff" opacity=".6"/></symbol><symbol id="b-disp3" viewBox="0 0 16 16"><path d="M0 3H16M0 8H16M0 13H16" stroke="#9a9a9a" stroke-width="1.1"/><rect x="8" y="1.2" width="5.6" height="3.6" rx="1" fill="#f5c542"/><rect x="9.7" y="2.1" width="2.2" height="1.8" fill="#fff" opacity=".6"/><rect x="2" y="6.2" width="5.6" height="3.6" rx="1" fill="#5bbde4"/><rect x="3.7" y="7.1" width="2.2" height="1.8" fill="#fff" opacity=".6"/><rect x="8" y="11.2" width="5.6" height="3.6" rx="1" fill="#f5c542"/><rect x="9.7" y="12.1" width="2.2" height="1.8" fill="#fff" opacity=".6"/></symbol><symbol id="h-dcheck" viewBox="0 0 16 16"><path d="M1.2 8.4L6 13L14.8 3.4" stroke="#fff" stroke-width="3" fill="none"/><path d="M4 3.8L6.6 6.4L11 1.4" stroke="#fff" stroke-width="2.5" fill="none"/></symbol><symbol id="h-dots" viewBox="0 0 16 16"><circle cx="2" cy="2" r="1.75" fill="#fff"/><circle cx="2" cy="8" r="1.75" fill="#fff"/><circle cx="2" cy="14" r="1.75" fill="#fff"/></symbol><symbol id="h-filter" viewBox="0 0 16 16"><path d="M.6 1H13.4L8.4 7V13.4L5.6 12V7Z" fill="#fff"/></symbol><symbol id="h-clear" viewBox="0 0 16 16"><path d="M.6 3C3 1 7 1.6 8.4 4.4L9.6 7V14L7 13V7.4Z" fill="#fff"/><path d="M9 4.4L13.6 .8M7 1L14 8" stroke="#fff" stroke-width="1.2"/></symbol><symbol id="h-cols" viewBox="0 0 16 16"><path d="M8 1V15" stroke="#fff" stroke-width="1.5"/><path d="M1 8H6M10 8H15" stroke="#fff" stroke-width="1.3"/><path d="M3.4 5.6L1 8L3.4 10.4M12.6 5.6L15 8L12.6 10.4" stroke="#fff" stroke-width="1.3" fill="none"/></symbol><symbol id="h-refresh" viewBox="0 0 16 16"><path d="M13.6 5A6.4 6.4 0 1 0 14.4 9.4" fill="none" stroke="#fff" stroke-width="1.7"/><path d="M9.4 .4L14.8 2.2L12.6 7Z" fill="#fff"/></symbol><symbol id="h-hand" viewBox="0 0 16 16"><path d="M6.2 23.4L1.4 15.6C.4 14 2 12.6 3.4 13.8L5.4 15.8V2.4C5.4 .2 8.6 .2 8.6 2.4V9.4C8.6 7.6 11.4 7.8 11.4 9.6V10.4C11.4 8.8 14 9 14 10.8V11.6C14 10.2 16.8 10.4 16.8 12.4V17.6C16.8 19.6 16.4 21.6 15.6 23.4Z" fill="#fff" stroke="#111" stroke-width="1.2" stroke-linejoin="round"/><path d="M8.6 10V14.6M11.4 11V14.6M14 12V14.8" stroke="#111" stroke-width=".9"/></symbol></defs></svg>
<div id="r">
<div style="left:0px;top:0px;width:1920px;height:1px;background:#5a5a5a;"></div>
<div style="left:6px;top:6px;width:198px;height:34px;border-radius:10px;background:linear-gradient(#3a3a3a,#303030 40%,#2a2a2a);box-shadow:0 1px 2px rgba(0,0,0,.2);"></div>
<div style="left:206px;top:6px;width:35px;height:34px;border-radius:3px 6px 6px 3px;background:linear-gradient(#343434,#2c2c2c);box-shadow:0 1px 2px rgba(0,0,0,.2);"></div>
<svg style="left:18.5px;top:12px;" width="19.5" height="19.5"><use href="#i-user"/></svg>
<div style="left:44px;top:14.7px;font-size:13px;line-height:20px;color:#fff;white-space:nowrap;font-weight:700;letter-spacing:-0.824px;">Sara Cunha</div>
<svg style="left:213px;top:13.2px;" width="20" height="20"><use href="#i-moon"/></svg>
<svg style="left:821px;top:10px;" width="19.5" height="19.5"><use href="#i-dash"/></svg>
<div style="left:854.7px;top:6.8px;font-size:19px;line-height:20px;color:#fff;white-space:nowrap;letter-spacing:-0.273px;">Sales dashboard - Orders</div>
<svg style="left:1080px;top:10px;" width="20" height="20"><use href="#i-edit"/></svg>
<svg style="left:1812px;top:10px" width="108" height="60" viewBox="1812 10 108 60">
<path d="M1815 37.2V25A12.2 12.2 0 0 1 1839.4 25A12.2 12.2 0 0 1 1827.2 37.2Z" fill="#87888c"/>
<circle cx="1840.7" cy="25" r="12.2" fill="#f5c542"/>
<path d="M1833.75 14.97A12.2 12.2 0 0 1 1833.75 35.03A12.2 12.2 0 0 1 1833.75 14.97Z" fill="#6e6337"/>
<path d="M1855 12.8H1866.4V25A12.2 12.2 0 1 1 1855 12.8Z" fill="#5bbde4"/>
<path d="M1847.85 15.1A12.2 12.2 0 0 1 1847.85 34.9A12.2 12.2 0 0 1 1847.85 15.1Z" fill="#8fa04c"/>
<circle cx="1826.8" cy="25" r="4.1" fill="#2a2a2a"/><circle cx="1840.7" cy="25" r="4.1" fill="#2a2a2a"/><circle cx="1855" cy="25" r="4.1" fill="#2a2a2a"/>
<path d="M1835 22.6A4.1 4.1 0 0 1 1836.6 25A4.1 4.1 0 0 1 1835 27.6Z" fill="#87888c" opacity=".0"/>
<path d="M1868.2 37.2V12.8H1874L1883.6 26.4V12.8H1890V37.2H1884.4L1874.6 23.4V37.2Z" fill="#87888c"/>
<path d="M1891.4 37.2L1900.4 12.8H1906.4L1915.4 37.2H1908.8L1907.4 33H1899.2L1897.8 37.2ZM1901 28H1905.6L1903.4 20.4Z" fill="#87888c"/>
<path d="M1851 42A12.2 12.2 0 0 1 1863.2 54.2V66.4H1851A12.2 12.2 0 0 1 1851 42Z" fill="#87888c"/>
<circle cx="1851" cy="54.2" r="4.1" fill="#2a2a2a"/>
<path d="M1864.4 66.4L1873.4 42H1879.4L1888.4 66.4H1881.8L1880.4 62.2H1872.2L1870.8 66.4ZM1874 57.2H1878.6L1876.4 49.6Z" fill="#87888c"/>
</svg>
<div style="left:5px;top:45px;width:1040px;height:30px;box-sizing:border-box;border:1px solid #474747;background:linear-gradient(#363636,#2a2a2a);"></div>
<svg style="left:13.5px;top:54px;" width="16" height="16"><use href="#i-home"/></svg>
<div style="left:34.2px;top:52.4px;font-size:13px;line-height:20px;color:#fff;white-space:nowrap;letter-spacing:-0.568px;">Home page</div>
<svg style="left:112.6px;top:54px;" width="16" height="16"><use href="#i-admin"/></svg>
<div style="left:132.2px;top:52.4px;font-size:13px;line-height:20px;color:#fff;white-space:nowrap;letter-spacing:-0.352px;">Administrator</div>
<svg style="left:212.5px;top:59.3px;" width="8" height="5.5" viewBox="0 0 8 5.5"><path d="M0 0H8L4.0 5.5Z" fill="#fff"/></svg>
<svg style="left:235.6px;top:54px;" width="16" height="16"><use href="#i-sales"/></svg>
<div style="left:256.7px;top:52.4px;font-size:13px;line-height:20px;color:#fff;white-space:nowrap;letter-spacing:-1.244px;">Sales</div>
<svg style="left:291px;top:59.3px;" width="8" height="5.5" viewBox="0 0 8 5.5"><path d="M0 0H8L4.0 5.5Z" fill="#fff"/></svg>
<svg style="left:315px;top:54px;z-index:31;" width="16" height="16"><use href="#i-manager"/></svg>
<div style="left:335.7px;top:52.4px;font-size:13px;line-height:20px;color:#fff;white-space:nowrap;letter-spacing:-0.673px;z-index:31;">Manager</div>
<svg style="left:390px;top:59.3px;z-index:31;" width="8" height="5.5" viewBox="0 0 8 5.5"><path d="M0 0H8L4.0 5.5Z" fill="#fff"/></svg>
<svg style="left:415.6px;top:54px;" width="16" height="16"><use href="#i-finance"/></svg>
<div style="left:434.7px;top:52.4px;font-size:13px;line-height:20px;color:#fff;white-space:nowrap;letter-spacing:-0.893px;">Finance</div>
<svg style="left:483px;top:59.3px;" width="8" height="5.5" viewBox="0 0 8 5.5"><path d="M0 0H8L4.0 5.5Z" fill="#fff"/></svg>
<svg style="left:506.6px;top:54px;" width="16" height="16"><use href="#i-super"/></svg>
<div style="left:526.6px;top:52.4px;font-size:13px;line-height:20px;color:#fff;white-space:nowrap;letter-spacing:-0.644px;">Supervisor</div>
<svg style="left:590px;top:59.3px;" width="8" height="5.5" viewBox="0 0 8 5.5"><path d="M0 0H8L4.0 5.5Z" fill="#fff"/></svg>
<svg style="left:614px;top:54px;" width="16" height="16"><use href="#i-mymenu"/></svg>
<div style="left:634px;top:52.4px;font-size:13px;line-height:20px;color:#fff;white-space:nowrap;letter-spacing:-0.494px;">My menu</div>
<svg style="left:692px;top:59.3px;" width="8" height="5.5" viewBox="0 0 8 5.5"><path d="M0 0H8L4.0 5.5Z" fill="#fff"/></svg>
<svg style="left:715.6px;top:54px;" width="16" height="16"><use href="#i-toolkit"/></svg>
<div style="left:736.5px;top:52.4px;font-size:13px;line-height:20px;color:#fff;white-space:nowrap;letter-spacing:-0.336px;">Toolkit</div>
<svg style="left:779px;top:59.3px;" width="8" height="5.5" viewBox="0 0 8 5.5"><path d="M0 0H8L4.0 5.5Z" fill="#fff"/></svg>
<svg style="left:803px;top:54px;" width="16" height="16"><use href="#i-help"/></svg>
<div style="left:824px;top:52.4px;font-size:13px;line-height:20px;color:#fff;white-space:nowrap;letter-spacing:-0.684px;">Help</div>
<svg style="left:856px;top:59.3px;" width="8" height="5.5" viewBox="0 0 8 5.5"><path d="M0 0H8L4.0 5.5Z" fill="#fff"/></svg>
<svg style="left:879.6px;top:54px;" width="16" height="16"><use href="#i-logout"/></svg>
<div style="left:900.6px;top:52.4px;font-size:13px;line-height:20px;color:#fff;white-space:nowrap;letter-spacing:-0.425px;">Log out</div>
<svg style="left:956.6px;top:54px;" width="16" height="16"><use href="#i-search"/></svg>
<div style="left:991px;top:52.4px;font-size:13px;line-height:20px;color:#fff;white-space:nowrap;letter-spacing:-0.751px;">08:59:39</div>
<div style="left:0px;top:89.4px;width:1920px;height:39.6px;background:#282625;"></div>
<div style="left:1px;top:91px;width:87px;height:38px;background:#4b4b4b;border-radius:3px 3px 0 0;"></div>
<div style="left:90px;top:91px;width:111px;height:37px;background:linear-gradient(#353433,#2b2a29 80%,#282726);border-radius:3px 3px 0 0;"></div>
<div style="left:203px;top:91px;width:77px;height:37px;background:linear-gradient(#353433,#2b2a29 80%,#282726);border-radius:3px 3px 0 0;"></div>
<div style="left:282px;top:91px;width:120px;height:37px;background:linear-gradient(#353433,#2b2a29 80%,#282726);border-radius:3px 3px 0 0;"></div>
<div style="left:0px;top:129px;width:1920px;height:3px;background:#2a2928;"></div>
<svg style="left:9px;top:95.6px;" width="24" height="24"><use href="#t-orders"/></svg>
<svg style="left:98px;top:95px;" width="24" height="24"><use href="#t-lang"/></svg>
<svg style="left:211px;top:95.6px;" width="24" height="24"><use href="#t-tasks"/></svg>
<svg style="left:289.6px;top:94.6px;" width="24" height="24"><use href="#t-coins"/></svg>
<div style="left:38px;top:100.0px;font-size:15px;line-height:20px;color:#fff;white-space:nowrap;letter-spacing:-0.641px;">Orders</div>
<div style="left:127px;top:100.0px;font-size:15px;line-height:20px;color:#fff;white-space:nowrap;letter-spacing:-0.882px;">Languages</div>
<div style="left:240.8px;top:100.0px;font-size:15px;line-height:20px;color:#fff;white-space:nowrap;letter-spacing:-1.429px;">Tasks</div>
<div style="left:0px;top:132px;width:1920px;height:99px;background:linear-gradient(#2b2b2b,#2f2f2f 20%,#414141 52%,#303030);"></div>
<div style="left:0px;top:231px;width:1920px;height:48px;background:#282828;"></div>
<div style="left:0px;top:279px;width:1920px;height:383px;background:#4f4f4f;"></div>
<div style="left:56px;top:138px;width:1px;height:93px;background:#2b2b2b;"></div>
<div style="left:56px;top:231px;width:1px;height:48px;background:#2e2e2e;"></div>
<div style="left:141px;top:138px;width:1px;height:93px;background:#2b2b2b;"></div>
<div style="left:141px;top:231px;width:1px;height:48px;background:#2e2e2e;"></div>
<div style="left:211px;top:138px;width:1px;height:93px;background:#2b2b2b;"></div>
<div style="left:211px;top:231px;width:1px;height:48px;background:#2e2e2e;"></div>
<div style="left:272px;top:138px;width:1px;height:93px;background:#2b2b2b;"></div>
<div style="left:272px;top:231px;width:1px;height:48px;background:#2e2e2e;"></div>
<div style="left:601px;top:138px;width:1px;height:93px;background:#2b2b2b;"></div>
<div style="left:601px;top:231px;width:1px;height:48px;background:#2e2e2e;"></div>
<div style="left:734px;top:138px;width:1px;height:93px;background:#2b2b2b;"></div>
<div style="left:734px;top:231px;width:1px;height:48px;background:#2e2e2e;"></div>
<div style="left:784px;top:138px;width:1px;height:93px;background:#2b2b2b;"></div>
<div style="left:784px;top:231px;width:1px;height:48px;background:#2e2e2e;"></div>
<div style="left:834px;top:138px;width:1px;height:93px;background:#2b2b2b;"></div>
<div style="left:834px;top:231px;width:1px;height:48px;background:#2e2e2e;"></div>
<div style="left:886px;top:138px;width:1px;height:93px;background:#2b2b2b;"></div>
<div style="left:886px;top:231px;width:1px;height:48px;background:#2e2e2e;"></div>
<div style="left:974px;top:138px;width:1px;height:93px;background:#2b2b2b;"></div>
<div style="left:974px;top:231px;width:1px;height:48px;background:#2e2e2e;"></div>
<div style="left:1024px;top:138px;width:1px;height:93px;background:#2b2b2b;"></div>
<div style="left:1024px;top:231px;width:1px;height:48px;background:#2e2e2e;"></div>
<div style="left:1161px;top:138px;width:1px;height:93px;background:#2b2b2b;"></div>
<div style="left:1161px;top:231px;width:1px;height:48px;background:#2e2e2e;"></div>
<div style="left:1231px;top:138px;width:1px;height:93px;background:#2b2b2b;"></div>
<div style="left:1231px;top:231px;width:1px;height:48px;background:#2e2e2e;"></div>
<div style="left:1281px;top:138px;width:1px;height:93px;background:#2b2b2b;"></div>
<div style="left:1281px;top:231px;width:1px;height:48px;background:#2e2e2e;"></div>
<div style="left:1331px;top:138px;width:1px;height:93px;background:#2b2b2b;"></div>
<div style="left:1331px;top:231px;width:1px;height:48px;background:#2e2e2e;"></div>
<div style="left:1495px;top:138px;width:1px;height:93px;background:#2b2b2b;"></div>
<div style="left:1495px;top:231px;width:1px;height:48px;background:#2e2e2e;"></div>
<div style="left:1651px;top:138px;width:1px;height:93px;background:#2b2b2b;"></div>
<div style="left:1651px;top:231px;width:1px;height:48px;background:#2e2e2e;"></div>
<div style="left:1859px;top:138px;width:1px;height:93px;background:#2b2b2b;"></div>
<div style="left:1859px;top:231px;width:1px;height:48px;background:#2e2e2e;"></div>
<div style="left:9px;top:202.7px;font-size:14px;line-height:20px;color:#fff;white-space:nowrap;letter-spacing:-0.245px;">Delete</div>
<div style="left:65px;top:202.7px;font-size:14px;line-height:20px;color:#fff;white-space:nowrap;letter-spacing:-0.348px;">Status</div>
<div style="left:150px;top:182.8px;font-size:14px;line-height:20px;color:#fff;white-space:nowrap;letter-spacing:-0.476px;">Recreate</div>
<div style="left:150px;top:202.7px;font-size:14px;line-height:20px;color:#fff;white-space:nowrap;letter-spacing:0.183px;">order</div>
<div style="left:220px;top:202.7px;font-size:14px;line-height:20px;color:#fff;white-space:nowrap;letter-spacing:-0.459px;">Flag</div>
<div style="left:281px;top:202.7px;font-size:14px;line-height:20px;color:#fff;white-space:nowrap;letter-spacing:-0.171px;">Copy</div>
<div style="left:610px;top:202.7px;font-size:14px;line-height:20px;color:#fff;white-space:nowrap;letter-spacing:-0.016px;">Order files</div>
<div style="left:743px;top:182.8px;font-size:14px;line-height:20px;color:#fff;white-space:nowrap;letter-spacing:0.230px;">Add</div>
<div style="left:743px;top:202.7px;font-size:14px;line-height:20px;color:#fff;white-space:nowrap;letter-spacing:0.276px;">file</div>
<div style="left:793px;top:202.7px;font-size:14px;line-height:20px;color:#fff;white-space:nowrap;letter-spacing:-0.480px;">Steps</div>
<div style="left:843px;top:182.8px;width:35px;height:20px;overflow:hidden;font-size:14px;line-height:20px;color:#fff;white-space:nowrap;letter-spacing:0.083px">Order</div>
<div style="left:843px;top:202.7px;width:35px;height:20px;overflow:hidden;font-size:14px;line-height:20px;color:#fff;white-space:nowrap;letter-spacing:0.507px">info</div>
<div style="left:895px;top:182.8px;font-size:14px;line-height:20px;color:#fff;white-space:nowrap;letter-spacing:0.083px;">Order</div>
<div style="left:895px;top:202.7px;font-size:14px;line-height:20px;color:#fff;white-space:nowrap;letter-spacing:0.155px;">number</div>
<div style="left:983px;top:202.7px;font-size:14px;line-height:20px;color:#fff;white-space:nowrap;letter-spacing:-0.757px;">Tasks</div>
<div style="left:1033px;top:202.7px;font-size:14px;line-height:20px;color:#fff;white-space:nowrap;letter-spacing:0.086px;">Correction order/s</div>
<div style="left:1170px;top:182.8px;width:53.5px;height:20px;overflow:hidden;font-size:14px;line-height:20px;color:#fff;white-space:nowrap;letter-spacing:0.176px">Unit</div>
<div style="left:1170px;top:202.7px;width:53.5px;height:20px;overflow:hidden;font-size:14px;line-height:20px;color:#fff;white-space:nowrap;letter-spacing:0.305px">reporting</div>
<div style="left:1240px;top:202.7px;width:33px;height:20px;overflow:hidden;font-size:14px;line-height:20px;color:#fff;white-space:nowrap;letter-spacing:-0.035px">Notes</div>
<div style="left:1290px;top:202.7px;width:33px;height:20px;overflow:hidden;font-size:14px;line-height:20px;color:#fff;white-space:nowrap;letter-spacing:-0.268px">Mess.</div>
<div style="left:1340px;top:202.7px;font-size:14px;line-height:20px;color:#fff;white-space:nowrap;letter-spacing:0.046px;">Date connected &amp; valid</div>
<div style="left:1504px;top:202.7px;font-size:14px;line-height:20px;color:#fff;white-space:nowrap;letter-spacing:0.119px;">Approved titles</div>
<div style="left:1660px;top:202.7px;font-size:14px;line-height:20px;color:#fff;white-space:nowrap;letter-spacing:0.094px;">Title</div>
<div style="left:1868px;top:202.7px;font-size:14px;line-height:20px;color:#fff;white-space:nowrap;letter-spacing:0.039px;">Customer</div>
<div style="left:539.4px;top:202.7px;font-size:14px;line-height:20px;color:#fff;white-space:nowrap;">ity</div>
<svg style="left:947.4px;top:209px" width="6.8" height="11" viewBox="0 0 8 13"><path d="M4 .5V11.5M.8 8.2L4 11.6L7.2 8.2" stroke="#fff" stroke-width="1.2" fill="none"/></svg>
<svg style="left:84.5px;top:142.3px;" width="15" height="15"><use href="#h-dcheck"/></svg>
<svg style="left:119.2px;top:143px" width="4" height="14" viewBox="0 0 4 16"><circle cx="2" cy="2" r="1.75" fill="#fff"/><circle cx="2" cy="8" r="1.75" fill="#fff"/><circle cx="2" cy="14" r="1.75" fill="#fff"/></svg>
<svg style="left:216px;top:142.3px;" width="15" height="15"><use href="#h-dcheck"/></svg>
<svg style="left:250.2px;top:143px" width="4" height="14" viewBox="0 0 4 16"><circle cx="2" cy="2" r="1.75" fill="#fff"/><circle cx="2" cy="8" r="1.75" fill="#fff"/><circle cx="2" cy="14" r="1.75" fill="#fff"/></svg>
<svg style="left:917.6px;top:142.3px;" width="15" height="15"><use href="#h-dcheck"/></svg>
<svg style="left:952.2px;top:143px" width="4" height="14" viewBox="0 0 4 16"><circle cx="2" cy="2" r="1.75" fill="#fff"/><circle cx="2" cy="8" r="1.75" fill="#fff"/><circle cx="2" cy="14" r="1.75" fill="#fff"/></svg>
<div style="left:1825px;top:135px;width:30px;height:30px;background:#2b62c8;"></div>
<svg style="left:1838px;top:143px" width="4" height="14" viewBox="0 0 4 16"><circle cx="2" cy="2" r="1.75" fill="#fff"/><circle cx="2" cy="8" r="1.75" fill="#fff"/><circle cx="2" cy="14" r="1.75" fill="#fff"/></svg>
<div style="left:66px;top:241px;width:67px;height:28px;background:linear-gradient(#313131,#262626);box-shadow:0 1px 2px rgba(0,0,0,.5);border-radius:3px;"></div>
<div style="left:66px;top:241px;width:41px;height:28px;background:#fff;border-radius:3px 0 0 3px;"></div>
<svg style="left:116px;top:252.5px;" width="8" height="5.5" viewBox="0 0 8 5.5"><path d="M0 0H8L4.0 5.5Z" fill="#fff"/></svg>
<div style="left:221px;top:241px;width:42px;height:28px;background:linear-gradient(#313131,#262626);box-shadow:0 1px 2px rgba(0,0,0,.5);border-radius:3px;"></div>
<div style="left:221px;top:241px;width:17px;height:28px;background:#fff;border-radius:3px 0 0 3px;"></div>
<svg style="left:246.5px;top:252.5px;" width="8" height="5.5" viewBox="0 0 8 5.5"><path d="M0 0H8L4.0 5.5Z" fill="#fff"/></svg>
<div style="left:896px;top:241px;width:69px;height:28px;background:linear-gradient(#313131,#262626);box-shadow:0 1px 2px rgba(0,0,0,.5);border-radius:3px;border:1px solid #3a3a3a;"></div>
<div style="left:896px;top:241px;width:44px;height:28px;background:#fff;border-radius:3px 0 0 3px;"></div>
<svg style="left:949px;top:245.4px" width="9" height="6" viewBox="0 0 9 6"><path d="M0 6H9L4.5 0Z" fill="#fff"/></svg>
<svg style="left:949px;top:258.6px" width="9" height="6" viewBox="0 0 9 6"><path d="M0 0H9L4.5 6Z" fill="#fff"/></svg>
<div style="left:941px;top:254.6px;width:23px;height:1px;background:#3a3a3a;"></div>
<div style="left:1660px;top:240.5px;width:123px;height:29px;background:#fff;border-radius:2px;"></div>
<div style="left:1669px;top:244.9px;font-size:14px;line-height:20px;color:#222;white-space:nowrap;">friends</div>
<div style="left:1788px;top:241.5px;width:28px;height:27px;background:linear-gradient(#313131,#262626);box-shadow:0 1px 2px rgba(0,0,0,.5);border-radius:3px;"></div>
<div style="left:1822px;top:241.5px;width:28px;height:27px;background:linear-gradient(#313131,#262626);box-shadow:0 1px 2px rgba(0,0,0,.5);border-radius:3px;"></div>
<svg style="left:1795px;top:248px;" width="14" height="14"><use href="#h-filter"/></svg>
<svg style="left:1828.6px;top:247px;" width="15.4" height="15.4"><use href="#h-clear"/></svg>
<div style="left:1868px;top:240.5px;width:60px;height:29px;background:#fff;border-radius:2px;"></div>
<div style="left:0px;top:279px;width:1920px;height:38px;background:#45546e;"></div>
<div style="left:56px;top:279px;width:1px;height:38px;background:#262626;"></div>
<div style="left:141px;top:279px;width:1px;height:38px;background:#262626;"></div>
<div style="left:211px;top:279px;width:1px;height:38px;background:#262626;"></div>
<div style="left:272px;top:279px;width:1px;height:38px;background:#262626;"></div>
<div style="left:601px;top:279px;width:1px;height:38px;background:#262626;"></div>
<div style="left:734px;top:279px;width:1px;height:38px;background:#262626;"></div>
<div style="left:784px;top:279px;width:1px;height:38px;background:#262626;"></div>
<div style="left:834px;top:279px;width:1px;height:38px;background:#262626;"></div>
<div style="left:886px;top:279px;width:1px;height:38px;background:#262626;"></div>
<div style="left:974px;top:279px;width:1px;height:38px;background:#262626;"></div>
<div style="left:1024px;top:279px;width:1px;height:38px;background:#262626;"></div>
<div style="left:1161px;top:279px;width:1px;height:38px;background:#262626;"></div>
<div style="left:1231px;top:279px;width:1px;height:38px;background:#262626;"></div>
<div style="left:1281px;top:279px;width:1px;height:38px;background:#262626;"></div>
<div style="left:1331px;top:279px;width:1px;height:38px;background:#262626;"></div>
<div style="left:1495px;top:279px;width:1px;height:38px;background:#262626;"></div>
<div style="left:1651px;top:279px;width:1px;height:38px;background:#262626;"></div>
<div style="left:1859px;top:279px;width:1px;height:38px;background:#262626;"></div>
<svg style="left:21px;top:288px;" width="16" height="16"><use href="#r-x"/></svg>
<div style="left:65px;top:287.4px;width:73px;height:22px;border:1px dotted #d4d4d4;border-radius:5px;"></div>
<div style="left:71.2px;top:288.5px;font-size:14px;line-height:20px;color:#fff;white-space:nowrap;letter-spacing:-0.154px;">In Progr...</div>
<svg style="left:169px;top:287.8px;" width="16" height="16"><use href="#r-plus"/></svg>
<svg style="left:234px;top:288.6px;opacity:.85;" width="16" height="16"><use href="#r-flag"/></svg>
<svg style="left:290px;top:288px" width="16" height="16" viewBox="0 0 16 16"><rect x=".6" y=".8" width="9" height="12.6" rx="1.4" fill="none" stroke="#5bbde4" stroke-width="1.1"/><path d="M6 5.4C6 4.4 6.6 3.8 7.6 3.8H12L15.4 7.2V14C15.4 15 14.8 15.6 13.8 15.6H7.6C6.6 15.6 6 15 6 14Z" fill="#45546e" stroke="#5bbde4" stroke-width="1.1"/><path d="M12 3.8V7.2H15.4" fill="none" stroke="#5bbde4" stroke-width="1"/><path d="M7.8 7.4H10.6" stroke="#f0c040" stroke-width="1"/><path d="M7.8 9.5H13.6M7.8 11.6H13.6M7.8 13.7H13.6" stroke="#e8b838" stroke-width="1.25"/></svg>
<svg style="left:660px;top:289px;" width="16" height="16"><use href="#r-folder"/></svg>
<svg style="left:752px;top:288px;" width="16" height="16"><use href="#r-add"/></svg>
<svg style="left:802px;top:288.4px;" width="16" height="16"><use href="#r-steps"/></svg>
<svg style="left:853px;top:287.6px;" width="16" height="16"><use href="#r-q"/></svg>
<div style="left:895.8px;top:288.5px;font-size:14px;line-height:20px;color:#fff;white-space:nowrap;letter-spacing:-0.420px;">189143</div>
<svg style="left:992px;top:287.6px;" width="16" height="16"><use href="#r-i"/></svg>
<svg style="left:1189px;top:288.4px;" width="16" height="16"><use href="#r-catg"/></svg>
<svg style="left:1249.4px;top:289px;" width="16" height="16"><use href="#r-note"/></svg>
<svg style="left:1299px;top:288.4px;" width="16" height="16"><use href="#r-mess"/></svg>
<svg style="left:1406px;top:288px" width="16" height="16" viewBox="0 0 16 16"><path d="M.8 15.2L3.6 12.4" stroke="#9ccc50" stroke-width="1.3"/><path d="M3.2 13.4C.8 11 2.4 6.4 6.4 4.6C9 3.4 11.4 3.6 13 2L15.4 .2L14.6 3C14.8 6 13.6 9.4 11 11.4C8.4 13.6 5 15 3.2 13.4Z" fill="#9ccc50"/><path d="M5 6.6L10.6 11.4" stroke="#45546e" stroke-width=".9" opacity=".5"/></svg>
<svg style="left:1566px;top:288.4px;" width="16" height="16"><use href="#r-bubble"/></svg>
<div style="left:1660px;top:287.2px;width:184px;height:22px;border:1px dotted #d4d4d4;border-radius:5px;"></div>
<div style="left:1666.4px;top:288.5px;font-size:14px;line-height:20px;color:#fff;white-space:nowrap;letter-spacing:-0.298px;">Friends</div>
<div style="left:1868px;top:288.5px;font-size:14px;line-height:20px;color:#fff;white-space:nowrap;letter-spacing:-0.581px;">Sara Pro</div>
<div style="left:0px;top:317px;width:1920px;height:38px;background:#5c5c5c;"></div>
<div style="left:56px;top:317px;width:1px;height:38px;background:#262626;"></div>
<div style="left:141px;top:317px;width:1px;height:38px;background:#262626;"></div>
<div style="left:211px;top:317px;width:1px;height:38px;background:#262626;"></div>
<div style="left:272px;top:317px;width:1px;height:38px;background:#262626;"></div>
<div style="left:601px;top:317px;width:1px;height:38px;background:#262626;"></div>
<div style="left:734px;top:317px;width:1px;height:38px;background:#262626;"></div>
<div style="left:784px;top:317px;width:1px;height:38px;background:#262626;"></div>
<div style="left:834px;top:317px;width:1px;height:38px;background:#262626;"></div>
<div style="left:886px;top:317px;width:1px;height:38px;background:#262626;"></div>
<div style="left:974px;top:317px;width:1px;height:38px;background:#262626;"></div>
<div style="left:1024px;top:317px;width:1px;height:38px;background:#262626;"></div>
<div style="left:1161px;top:317px;width:1px;height:38px;background:#262626;"></div>
<div style="left:1231px;top:317px;width:1px;height:38px;background:#262626;"></div>
<div style="left:1281px;top:317px;width:1px;height:38px;background:#262626;"></div>
<div style="left:1331px;top:317px;width:1px;height:38px;background:#262626;"></div>
<div style="left:1495px;top:317px;width:1px;height:38px;background:#262626;"></div>
<div style="left:1651px;top:317px;width:1px;height:38px;background:#262626;"></div>
<div style="left:1859px;top:317px;width:1px;height:38px;background:#262626;"></div>
<svg style="left:21px;top:326px;" width="16" height="16"><use href="#r-x"/></svg>
<div style="left:65px;top:325.4px;width:73px;height:22px;border:1px dotted #d4d4d4;border-radius:5px;"></div>
<div style="left:71.2px;top:326.5px;font-size:14px;line-height:20px;color:#fff;white-space:nowrap;letter-spacing:-0.154px;">In Progr...</div>
<svg style="left:169px;top:325.8px;" width="16" height="16"><use href="#r-plus"/></svg>
<svg style="left:234px;top:326.6px;opacity:.85;" width="16" height="16"><use href="#r-flag"/></svg>
<svg style="left:290px;top:326px" width="16" height="16" viewBox="0 0 16 16"><rect x=".6" y=".8" width="9" height="12.6" rx="1.4" fill="none" stroke="#5bbde4" stroke-width="1.1"/><path d="M6 5.4C6 4.4 6.6 3.8 7.6 3.8H12L15.4 7.2V14C15.4 15 14.8 15.6 13.8 15.6H7.6C6.6 15.6 6 15 6 14Z" fill="#5c5c5c" stroke="#5bbde4" stroke-width="1.1"/><path d="M12 3.8V7.2H15.4" fill="none" stroke="#5bbde4" stroke-width="1"/><path d="M7.8 7.4H10.6" stroke="#f0c040" stroke-width="1"/><path d="M7.8 9.5H13.6M7.8 11.6H13.6M7.8 13.7H13.6" stroke="#e8b838" stroke-width="1.25"/></svg>
<svg style="left:660px;top:327px;" width="16" height="16"><use href="#r-folder"/></svg>
<svg style="left:752px;top:326px;" width="16" height="16"><use href="#r-add"/></svg>
<svg style="left:802px;top:326.4px;" width="16" height="16"><use href="#r-steps"/></svg>
<svg style="left:853px;top:325.6px;" width="16" height="16"><use href="#r-q"/></svg>
<div style="left:895.8px;top:326.5px;font-size:14px;line-height:20px;color:#fff;white-space:nowrap;letter-spacing:-0.420px;">189142</div>
<svg style="left:992px;top:325.6px;" width="16" height="16"><use href="#r-i"/></svg>
<svg style="left:1189px;top:326.4px;" width="16" height="16"><use href="#r-caty"/></svg>
<svg style="left:1249.4px;top:327px;" width="16" height="16"><use href="#r-note"/></svg>
<svg style="left:1299px;top:326.4px;" width="16" height="16"><use href="#r-mess"/></svg>
<svg style="left:1406px;top:326px" width="16" height="16" viewBox="0 0 16 16"><path d="M.8 15.2L3.6 12.4" stroke="#9ccc50" stroke-width="1.3"/><path d="M3.2 13.4C.8 11 2.4 6.4 6.4 4.6C9 3.4 11.4 3.6 13 2L15.4 .2L14.6 3C14.8 6 13.6 9.4 11 11.4C8.4 13.6 5 15 3.2 13.4Z" fill="#9ccc50"/><path d="M5 6.6L10.6 11.4" stroke="#5c5c5c" stroke-width=".9" opacity=".5"/></svg>
<svg style="left:1566px;top:326.4px;" width="16" height="16"><use href="#r-bubble"/></svg>
<div style="left:1660px;top:325.2px;width:184px;height:22px;border:1px dotted #d4d4d4;border-radius:5px;"></div>
<div style="left:1666.4px;top:326.5px;font-size:14px;line-height:20px;color:#fff;white-space:nowrap;letter-spacing:-0.298px;">Friends</div>
<div style="left:1868px;top:326.5px;font-size:14px;line-height:20px;color:#fff;white-space:nowrap;letter-spacing:-0.581px;">Sara Pro</div>
<div style="left:0px;top:355px;width:1920px;height:38px;background:#4d4d4d;"></div>
<div style="left:56px;top:355px;width:1px;height:38px;background:#262626;"></div>
<div style="left:141px;top:355px;width:1px;height:38px;background:#262626;"></div>
<div style="left:211px;top:355px;width:1px;height:38px;background:#262626;"></div>
<div style="left:272px;top:355px;width:1px;height:38px;background:#262626;"></div>
<div style="left:601px;top:355px;width:1px;height:38px;background:#262626;"></div>
<div style="left:734px;top:355px;width:1px;height:38px;background:#262626;"></div>
<div style="left:784px;top:355px;width:1px;height:38px;background:#262626;"></div>
<div style="left:834px;top:355px;width:1px;height:38px;background:#262626;"></div>
<div style="left:886px;top:355px;width:1px;height:38px;background:#262626;"></div>
<div style="left:974px;top:355px;width:1px;height:38px;background:#262626;"></div>
<div style="left:1024px;top:355px;width:1px;height:38px;background:#262626;"></div>
<div style="left:1161px;top:355px;width:1px;height:38px;background:#262626;"></div>
<div style="left:1231px;top:355px;width:1px;height:38px;background:#262626;"></div>
<div style="left:1281px;top:355px;width:1px;height:38px;background:#262626;"></div>
<div style="left:1331px;top:355px;width:1px;height:38px;background:#262626;"></div>
<div style="left:1495px;top:355px;width:1px;height:38px;background:#262626;"></div>
<div style="left:1651px;top:355px;width:1px;height:38px;background:#262626;"></div>
<div style="left:1859px;top:355px;width:1px;height:38px;background:#262626;"></div>
<svg style="left:21px;top:364px;" width="16" height="16"><use href="#r-x"/></svg>
<div style="left:65px;top:363.4px;width:73px;height:22px;border:1px dotted #d4d4d4;border-radius:5px;"></div>
<div style="left:71.2px;top:364.5px;font-size:14px;line-height:20px;color:#fff;white-space:nowrap;letter-spacing:-0.154px;">In Progr...</div>
<svg style="left:169px;top:363.8px;" width="16" height="16"><use href="#r-plus"/></svg>
<svg style="left:234px;top:364.6px;opacity:.85;" width="16" height="16"><use href="#r-flag"/></svg>
<svg style="left:290px;top:364px" width="16" height="16" viewBox="0 0 16 16"><rect x=".6" y=".8" width="9" height="12.6" rx="1.4" fill="none" stroke="#5bbde4" stroke-width="1.1"/><path d="M6 5.4C6 4.4 6.6 3.8 7.6 3.8H12L15.4 7.2V14C15.4 15 14.8 15.6 13.8 15.6H7.6C6.6 15.6 6 15 6 14Z" fill="#4d4d4d" stroke="#5bbde4" stroke-width="1.1"/><path d="M12 3.8V7.2H15.4" fill="none" stroke="#5bbde4" stroke-width="1"/><path d="M7.8 7.4H10.6" stroke="#f0c040" stroke-width="1"/><path d="M7.8 9.5H13.6M7.8 11.6H13.6M7.8 13.7H13.6" stroke="#e8b838" stroke-width="1.25"/></svg>
<svg style="left:660px;top:365px;" width="16" height="16"><use href="#r-folder"/></svg>
<svg style="left:752px;top:364px;" width="16" height="16"><use href="#r-add"/></svg>
<svg style="left:802px;top:364.4px;" width="16" height="16"><use href="#r-steps"/></svg>
<svg style="left:853px;top:363.6px;" width="16" height="16"><use href="#r-q"/></svg>
<div style="left:895.8px;top:364.5px;font-size:14px;line-height:20px;color:#fff;white-space:nowrap;letter-spacing:-0.420px;">189141</div>
<svg style="left:992px;top:363.6px;" width="16" height="16"><use href="#r-i"/></svg>
<svg style="left:1189px;top:364.4px;" width="16" height="16"><use href="#r-cat0"/></svg>
<svg style="left:1249.4px;top:365px;" width="16" height="16"><use href="#r-note"/></svg>
<svg style="left:1299px;top:364.4px;" width="16" height="16"><use href="#r-mess"/></svg>
<svg style="left:1406px;top:364px" width="16" height="16" viewBox="0 0 16 16"><path d="M.8 15.2L3.6 12.4" stroke="#9ccc50" stroke-width="1.3"/><path d="M3.2 13.4C.8 11 2.4 6.4 6.4 4.6C9 3.4 11.4 3.6 13 2L15.4 .2L14.6 3C14.8 6 13.6 9.4 11 11.4C8.4 13.6 5 15 3.2 13.4Z" fill="#9ccc50"/><path d="M5 6.6L10.6 11.4" stroke="#4d4d4d" stroke-width=".9" opacity=".5"/></svg>
<svg style="left:1566px;top:364.4px;" width="16" height="16"><use href="#r-bubble"/></svg>
<div style="left:1660px;top:363.2px;width:184px;height:22px;border:1px dotted #d4d4d4;border-radius:5px;"></div>
<div style="left:1666.4px;top:364.5px;font-size:14px;line-height:20px;color:#fff;white-space:nowrap;letter-spacing:-0.298px;">Friends</div>
<div style="left:1868px;top:364.5px;font-size:14px;line-height:20px;color:#fff;white-space:nowrap;letter-spacing:-0.581px;">Sara Pro</div>
<div style="left:0px;top:393px;width:1920px;height:38px;background:#918490;"></div>
<div style="left:56px;top:393px;width:1px;height:38px;background:#262626;"></div>
<div style="left:141px;top:393px;width:1px;height:38px;background:#262626;"></div>
<div style="left:211px;top:393px;width:1px;height:38px;background:#262626;"></div>
<div style="left:272px;top:393px;width:1px;height:38px;background:#262626;"></div>
<div style="left:601px;top:393px;width:1px;height:38px;background:#262626;"></div>
<div style="left:734px;top:393px;width:1px;height:38px;background:#262626;"></div>
<div style="left:784px;top:393px;width:1px;height:38px;background:#262626;"></div>
<div style="left:834px;top:393px;width:1px;height:38px;background:#262626;"></div>
<div style="left:886px;top:393px;width:1px;height:38px;background:#262626;"></div>
<div style="left:974px;top:393px;width:1px;height:38px;background:#262626;"></div>
<div style="left:1024px;top:393px;width:1px;height:38px;background:#262626;"></div>
<div style="left:1161px;top:393px;width:1px;height:38px;background:#262626;"></div>
<div style="left:1231px;top:393px;width:1px;height:38px;background:#262626;"></div>
<div style="left:1281px;top:393px;width:1px;height:38px;background:#262626;"></div>
<div style="left:1331px;top:393px;width:1px;height:38px;background:#262626;"></div>
<div style="left:1495px;top:393px;width:1px;height:38px;background:#262626;"></div>
<div style="left:1651px;top:393px;width:1px;height:38px;background:#262626;"></div>
<div style="left:1859px;top:393px;width:1px;height:38px;background:#262626;"></div>
<svg style="left:21px;top:402px;" width="16" height="16"><use href="#r-xred"/></svg>
<div style="left:65px;top:401.4px;width:73px;height:22px;border:1px dotted #d4d4d4;border-radius:5px;"></div>
<div style="left:71.2px;top:402.5px;font-size:14px;line-height:20px;color:#fff;white-space:nowrap;letter-spacing:-0.169px;">New</div>
<svg style="left:169px;top:401.8px;" width="16" height="16"><use href="#r-plusb"/></svg>
<svg style="left:234px;top:402.6px;opacity:.75;" width="16" height="16"><use href="#r-flagm"/></svg>
<svg style="left:290px;top:402px" width="16" height="16" viewBox="0 0 16 16"><rect x=".6" y=".8" width="9" height="12.6" rx="1.4" fill="none" stroke="#5bbde4" stroke-width="1.1"/><path d="M6 5.4C6 4.4 6.6 3.8 7.6 3.8H12L15.4 7.2V14C15.4 15 14.8 15.6 13.8 15.6H7.6C6.6 15.6 6 15 6 14Z" fill="#918490" stroke="#5bbde4" stroke-width="1.1"/><path d="M12 3.8V7.2H15.4" fill="none" stroke="#5bbde4" stroke-width="1"/><path d="M7.8 7.4H10.6" stroke="#f0c040" stroke-width="1"/><path d="M7.8 9.5H13.6M7.8 11.6H13.6M7.8 13.7H13.6" stroke="#e8b838" stroke-width="1.25"/></svg>
<svg style="left:660.4px;top:402.2px;" width="16" height="16"><use href="#r-folderg"/></svg>
<svg style="left:752px;top:402px;" width="16" height="16"><use href="#r-add"/></svg>
<svg style="left:802px;top:402.4px;opacity:.8;" width="16" height="16"><use href="#r-steps"/></svg>
<svg style="left:853px;top:401.6px;" width="16" height="16"><use href="#r-q"/></svg>
<div style="left:895.8px;top:402.5px;font-size:14px;line-height:20px;color:#fff;white-space:nowrap;letter-spacing:-0.420px;">189139</div>
<svg style="left:992px;top:401.6px;" width="16" height="16"><use href="#r-i"/></svg>
<svg style="left:1189px;top:402.4px;" width="16" height="16"><use href="#r-cat0"/></svg>
<svg style="left:1249.4px;top:403px;" width="16" height="16"><use href="#r-note"/></svg>
<svg style="left:1299px;top:402.4px;" width="16" height="16"><use href="#r-mess"/></svg>
<svg style="left:1406px;top:402px" width="16" height="16" viewBox="0 0 16 16"><path d="M.8 15.2L3.6 12.4" stroke="#9ccc50" stroke-width="1.3"/><path d="M3.2 13.4C.8 11 2.4 6.4 6.4 4.6C9 3.4 11.4 3.6 13 2L15.4 .2L14.6 3C14.8 6 13.6 9.4 11 11.4C8.4 13.6 5 15 3.2 13.4Z" fill="#9ccc50"/><path d="M5 6.6L10.6 11.4" stroke="#918490" stroke-width=".9" opacity=".5"/></svg>
<svg style="left:1566px;top:402.4px;" width="16" height="16"><use href="#r-bubble"/></svg>
<div style="left:1660px;top:401.2px;width:184px;height:22px;border:1px dotted #d4d4d4;border-radius:5px;"></div>
<div style="left:1666.4px;top:402.5px;font-size:14px;line-height:20px;color:#fff;white-space:nowrap;letter-spacing:-0.298px;">Friends</div>
<div style="left:1868px;top:402.5px;font-size:14px;line-height:20px;color:#fff;white-space:nowrap;letter-spacing:-0.581px;">Sara Pro</div>
<div style="left:0px;top:431px;width:1920px;height:38px;background:#4d4d4d;"></div>
<div style="left:56px;top:431px;width:1px;height:38px;background:#262626;"></div>
<div style="left:141px;top:431px;width:1px;height:38px;background:#262626;"></div>
<div style="left:211px;top:431px;width:1px;height:38px;background:#262626;"></div>
<div style="left:272px;top:431px;width:1px;height:38px;background:#262626;"></div>
<div style="left:601px;top:431px;width:1px;height:38px;background:#262626;"></div>
<div style="left:734px;top:431px;width:1px;height:38px;background:#262626;"></div>
<div style="left:784px;top:431px;width:1px;height:38px;background:#262626;"></div>
<div style="left:834px;top:431px;width:1px;height:38px;background:#262626;"></div>
<div style="left:886px;top:431px;width:1px;height:38px;background:#262626;"></div>
<div style="left:974px;top:431px;width:1px;height:38px;background:#262626;"></div>
<div style="left:1024px;top:431px;width:1px;height:38px;background:#262626;"></div>
<div style="left:1161px;top:431px;width:1px;height:38px;background:#262626;"></div>
<div style="left:1231px;top:431px;width:1px;height:38px;background:#262626;"></div>
<div style="left:1281px;top:431px;width:1px;height:38px;background:#262626;"></div>
<div style="left:1331px;top:431px;width:1px;height:38px;background:#262626;"></div>
<div style="left:1495px;top:431px;width:1px;height:38px;background:#262626;"></div>
<div style="left:1651px;top:431px;width:1px;height:38px;background:#262626;"></div>
<div style="left:1859px;top:431px;width:1px;height:38px;background:#262626;"></div>
<svg style="left:21px;top:440px;" width="16" height="16"><use href="#r-x"/></svg>
<div style="left:65px;top:439.4px;width:73px;height:22px;border:1px dotted #d4d4d4;border-radius:5px;"></div>
<div style="left:71.2px;top:440.5px;font-size:14px;line-height:20px;color:#fff;white-space:nowrap;letter-spacing:-0.154px;">In Progr...</div>
<svg style="left:169px;top:439.8px;" width="16" height="16"><use href="#r-plus"/></svg>
<svg style="left:234px;top:440.6px;opacity:.85;" width="16" height="16"><use href="#r-flag"/></svg>
<svg style="left:290px;top:440px" width="16" height="16" viewBox="0 0 16 16"><rect x=".6" y=".8" width="9" height="12.6" rx="1.4" fill="none" stroke="#5bbde4" stroke-width="1.1"/><path d="M6 5.4C6 4.4 6.6 3.8 7.6 3.8H12L15.4 7.2V14C15.4 15 14.8 15.6 13.8 15.6H7.6C6.6 15.6 6 15 6 14Z" fill="#4d4d4d" stroke="#5bbde4" stroke-width="1.1"/><path d="M12 3.8V7.2H15.4" fill="none" stroke="#5bbde4" stroke-width="1"/><path d="M7.8 7.4H10.6" stroke="#f0c040" stroke-width="1"/><path d="M7.8 9.5H13.6M7.8 11.6H13.6M7.8 13.7H13.6" stroke="#e8b838" stroke-width="1.25"/></svg>
<svg style="left:660px;top:441px;" width="16" height="16"><use href="#r-folder"/></svg>
<svg style="left:752px;top:440px;" width="16" height="16"><use href="#r-add"/></svg>
<svg style="left:802px;top:440.4px;" width="16" height="16"><use href="#r-steps"/></svg>
<svg style="left:853px;top:439.6px;" width="16" height="16"><use href="#r-q"/></svg>
<div style="left:895.8px;top:440.5px;font-size:14px;line-height:20px;color:#fff;white-space:nowrap;letter-spacing:-0.420px;">189138</div>
<svg style="left:992px;top:439.6px;" width="16" height="16"><use href="#r-i"/></svg>
<svg style="left:1189px;top:440.4px;" width="16" height="16"><use href="#r-cat0"/></svg>
<svg style="left:1249.4px;top:441px;" width="16" height="16"><use href="#r-note"/></svg>
<svg style="left:1299px;top:440.4px;" width="16" height="16"><use href="#r-mess"/></svg>
<svg style="left:1406px;top:440px" width="16" height="16" viewBox="0 0 16 16"><path d="M.8 15.2L3.6 12.4" stroke="#9ccc50" stroke-width="1.3"/><path d="M3.2 13.4C.8 11 2.4 6.4 6.4 4.6C9 3.4 11.4 3.6 13 2L15.4 .2L14.6 3C14.8 6 13.6 9.4 11 11.4C8.4 13.6 5 15 3.2 13.4Z" fill="#9ccc50"/><path d="M5 6.6L10.6 11.4" stroke="#4d4d4d" stroke-width=".9" opacity=".5"/></svg>
<svg style="left:1566px;top:440.4px;" width="16" height="16"><use href="#r-bubble"/></svg>
<div style="left:1660px;top:439.2px;width:184px;height:22px;border:1px dotted #d4d4d4;border-radius:5px;"></div>
<div style="left:1666.4px;top:440.5px;font-size:14px;line-height:20px;color:#fff;white-space:nowrap;letter-spacing:-0.298px;">Friends</div>
<div style="left:1868px;top:440.5px;font-size:14px;line-height:20px;color:#fff;white-space:nowrap;letter-spacing:-0.581px;">Sara Pro</div>
<div style="left:0px;top:132px;width:1px;height:530px;background:rgba(255,255,255,.13);"></div>
<div style="left:0px;top:662px;width:1920px;height:17px;background:#f1f1f1;"></div>
<div style="left:18px;top:664px;width:408px;height:13px;background:#c1c1c1;"></div>
<svg style="left:6px;top:666px" width="5" height="9" viewBox="0 0 5 9"><path d="M5 0V9L0 4.5Z" fill="#a3a3a3"/></svg>
<svg style="left:1908px;top:666px" width="5" height="9" viewBox="0 0 5 9"><path d="M0 0V9L5 4.5Z" fill="#505050"/></svg>
<div style="left:0px;top:679px;width:1920px;height:39px;background:linear-gradient(#2b2b2b,#2f2f2f 40%,#363636);"></div>
<svg style="left:8px;top:688.6px;" width="16" height="16"><use href="#b-addg"/></svg>
<div style="left:29.7px;top:689.7px;font-size:13px;line-height:20px;color:#fff;white-space:nowrap;letter-spacing:-0.427px;">Add new order</div>
<svg style="left:120px;top:688.6px;" width="16" height="16"><use href="#b-addg"/></svg>
<div style="left:141.3px;top:689.7px;font-size:13px;line-height:20px;color:#fff;white-space:nowrap;letter-spacing:-0.501px;">Order wizard</div>
<div style="left:228px;top:695.2px;width:1px;height:10px;background:#e8e8e8;"></div>
<div style="left:256px;top:685.5px;width:131px;height:28px;background:#f3a73b;border:1px solid #c4501e;border-radius:4px;box-shadow:0 0 1px rgba(200,70,30,.8);"></div>
<svg style="left:269.6px;top:690px;" width="16" height="16"><use href="#b-funnel"/></svg>
<div style="left:295.2px;top:691.5px;font-size:13px;line-height:20px;color:#111;white-space:nowrap;font-weight:700;letter-spacing:-0.691px;">Range options</div>
<div style="left:395px;top:686px;width:100px;height:27px;background:#f3a73b;border:1px solid #c4501e;border-radius:4px;box-shadow:0 0 1px rgba(200,70,30,.8);"></div>
<svg style="left:403.6px;top:689.4px;" width="16" height="16"><use href="#b-gearo"/></svg>
<div style="left:426.2px;top:691.1px;font-size:13px;line-height:20px;color:#111;white-space:nowrap;font-weight:700;letter-spacing:-0.511px;">Grid layout</div>
<svg style="left:506px;top:689px;" width="16" height="16"><use href="#b-gear"/></svg>
<div style="left:528px;top:689.7px;font-size:13px;line-height:20px;color:#fff;white-space:nowrap;letter-spacing:-0.411px;">Settings</div>
<svg style="left:818px;top:687px;" width="16" height="16"><use href="#b-leaf"/></svg>
<div style="left:837.5px;top:689.7px;font-size:13px;line-height:20px;color:#fff;white-space:nowrap;letter-spacing:-0.549px;">Connect all</div>
<svg style="left:914px;top:688px;" width="16" height="16"><use href="#b-folder"/></svg>
<div style="left:937px;top:689.7px;font-size:13px;line-height:20px;color:#fff;white-space:nowrap;letter-spacing:-0.418px;">Upload to Orders</div>
<svg style="left:1046.6px;top:688px;" width="16" height="16"><use href="#b-folder"/></svg>
<div style="left:1068.7px;top:689.7px;font-size:13px;line-height:20px;color:#fff;white-space:nowrap;letter-spacing:-0.438px;">Upload streaming folders</div>
<svg style="left:1222px;top:689.6px;" width="16" height="16"><use href="#b-mail"/></svg>
<div style="left:1243.6px;top:689.7px;font-size:13px;line-height:20px;color:#fff;white-space:nowrap;letter-spacing:-0.487px;">Send assignment notifications</div>
<svg style="left:1413px;top:688.6px;" width="16" height="16"><use href="#b-calc"/></svg>
<div style="left:1435.3px;top:689.7px;font-size:13px;line-height:20px;color:#fff;white-space:nowrap;letter-spacing:-0.812px;">Recalculate</div>
<svg style="left:1505px;top:688px;" width="16" height="16"><use href="#b-auto"/></svg>
<div style="left:1527px;top:689.7px;font-size:13px;line-height:20px;color:#fff;white-space:nowrap;letter-spacing:-0.430px;">Apply automatic assignment</div>
<div style="left:0px;top:718px;width:1920px;height:36px;background:linear-gradient(#292929,#3a3a3a 55%,#2d2d2d);"></div>
<svg style="left:13.6px;top:733px" width="9" height="8.6" viewBox="0 0 9 10"><path d="M0 0H1.6V10H0ZM9 0V10L2.4 5Z" fill="#bdbdbd"/></svg>
<svg style="left:45.4px;top:733px" width="6.4" height="8.6" viewBox="0 0 7 10"><path d="M7 0V10L0 5Z" fill="#bdbdbd"/></svg>
<div style="left:63px;top:722px;width:30px;height:30px;background:#5c5c5c;"></div>
<div style="left:73.6px;top:727.0px;font-size:15px;line-height:20px;color:#fff;white-space:nowrap;">1</div>
<svg style="left:104.6px;top:733px" width="6.4" height="8.6" viewBox="0 0 7 10"><path d="M0 0V10L7 5Z" fill="#bdbdbd"/></svg>
<svg style="left:133.8px;top:733px" width="9" height="8.6" viewBox="0 0 9 10"><path d="M7.4 0H9V10H7.4ZM0 0V10L6.6 5Z" fill="#bdbdbd"/></svg>
<div style="left:167px;top:727.2px;font-size:13px;line-height:20px;color:#fff;white-space:nowrap;letter-spacing:-1.091px;">Page</div>
<div style="left:200.7px;top:723px;width:68.4px;height:28px;background:#fff;border-radius:3px;"></div>
<div style="left:209px;top:726.5px;font-size:14px;line-height:20px;color:#222;white-space:nowrap;">1</div>
<div style="left:276.2px;top:727.2px;font-size:13px;line-height:20px;color:#fff;white-space:nowrap;letter-spacing:-0.221px;">of 1</div>
<div style="left:312px;top:723px;width:68.4px;height:28px;background:linear-gradient(#313131,#262626);border-radius:3px;box-shadow:0 1px 2px rgba(0,0,0,.5);"></div>
<div style="left:312px;top:723px;width:43px;height:28px;background:#fff;border-radius:3px 0 0 3px;"></div>
<div style="left:320px;top:726.5px;font-size:14px;line-height:20px;color:#222;white-space:nowrap;letter-spacing:-0.286px;">20</div>
<svg style="left:364px;top:734.4px;" width="8" height="5.5" viewBox="0 0 8 5.5"><path d="M0 0H8L4.0 5.5Z" fill="#fff"/></svg>
<div style="left:388px;top:727.2px;font-size:13px;line-height:20px;color:#fff;white-space:nowrap;letter-spacing:-0.464px;">items per page</div>
<div style="left:1717px;top:727.2px;font-size:13px;line-height:20px;color:#fff;white-space:nowrap;letter-spacing:-0.374px;">1 - 5 of 5 items</div>
<div style="left:1811px;top:724px;width:26px;height:26px;background:#222;border-radius:13px;box-shadow:0 1px 2px rgba(0,0,0,.5);"></div>
<svg style="left:1816.5px;top:729.5px;" width="15" height="15"><use href="#h-cols"/></svg>
<div style="left:1851px;top:724px;width:26px;height:26px;background:#222;border-radius:13px;box-shadow:0 1px 2px rgba(0,0,0,.5);"></div>
<svg style="left:1856.5px;top:729.5px;" width="15" height="15"><use href="#h-clear"/></svg>
<div style="left:1891px;top:724px;width:26px;height:26px;background:#222;border-radius:13px;box-shadow:0 1px 2px rgba(0,0,0,.5);"></div>
<svg style="left:1896.5px;top:729.5px;" width="15" height="15"><use href="#h-refresh"/></svg>
<div style="left:0px;top:754px;width:1920px;height:105px;background:#262423;"></div>
<div style="left:14px;top:769px;width:1605px;height:50px;background:#4b4b4b;"></div>
<div style="left:19px;top:776px;width:113px;height:36px;background:linear-gradient(#2e2e2e,#272727);border-radius:4px;box-shadow:0 0 0 1px #3c3c3c inset;"></div>
<svg style="left:28.6px;top:782.4px;" width="24.5" height="24.5"><use href="#b-bulk"/></svg>
<div style="left:59px;top:785.4px;font-size:13px;line-height:20px;color:#fff;white-space:nowrap;letter-spacing:-0.566px;">Bulk actions</div>
<div style="left:137px;top:769px;width:97px;height:50px;background:linear-gradient(#2a2a2a,#3b3b3b 55%,#2e2e2e);"></div>
<div style="left:141.3px;top:785.4px;font-size:13px;line-height:20px;color:#fff;white-space:nowrap;letter-spacing:-0.581px;">Change status to</div>
<div style="left:253.7px;top:778.5px;width:179px;height:31px;background:linear-gradient(#313131,#262626);border-radius:4px;box-shadow:0 1px 2px rgba(0,0,0,.5);"></div>
<div style="left:253.7px;top:778.5px;width:153.4px;height:31px;background:#fff;border-radius:4px 0 0 4px;"></div>
<div style="left:262.6px;top:785.4px;font-size:16px;line-height:20px;color:#111;white-space:nowrap;letter-spacing:-0.471px;">Select status...</div>
<svg style="left:416px;top:790.6px;" width="8" height="5.5" viewBox="0 0 8 5.5"><path d="M0 0H8L4.0 5.5Z" fill="#fff"/></svg>
<div style="left:435.4px;top:777px;width:47.4px;height:33px;background:#3b3b3b;border-radius:4px;box-shadow:0 0 0 1px #444 inset;"></div>
<div style="left:443.6px;top:785.5px;font-size:13px;line-height:20px;color:#9c9c9c;white-space:nowrap;letter-spacing:-0.424px;">Apply</div>
<div style="left:491.4px;top:769px;width:60px;height:50px;background:linear-gradient(#2a2a2a,#3b3b3b 55%,#2e2e2e);"></div>
<div style="left:495.5px;top:785.4px;font-size:13px;line-height:20px;color:#fff;white-space:nowrap;letter-spacing:-0.923px;">Change</div>
<div style="left:820px;top:769px;width:67px;height:50px;background:linear-gradient(#2a2a2a,#3b3b3b 55%,#2e2e2e);"></div>
<div style="left:815.8px;top:786.3px;font-size:13px;line-height:20px;color:#fff;white-space:nowrap;letter-spacing:0.033px;">Update date</div>
<div style="left:887px;top:770px;width:268px;height:48px;border:1px solid #595959;"></div>
<div style="left:913px;top:777px;width:198.4px;height:34.4px;background:linear-gradient(#313131,#262626);border-radius:4px;box-shadow:0 1px 2px rgba(0,0,0,.5);"></div>
<div style="left:913px;top:777px;width:148.4px;height:34.4px;background:#fff;border-radius:4px 0 0 4px;"></div>
<div style="left:1086px;top:778px;width:1px;height:32px;background:#383838;"></div>
<svg style="left:1066px;top:785.6px;" width="15.4" height="15.4"><use href="#b-cal"/></svg>
<svg style="left:1091px;top:786px;" width="15" height="15"><use href="#b-clock"/></svg>
<div style="left:1113.2px;top:776.4px;width:32px;height:35.4px;background:linear-gradient(#313131,#262626);border-radius:3px 14px 14px 3px;box-shadow:0 1px 2px rgba(0,0,0,.5);"></div>
<svg style="left:1121.6px;top:786px;" width="16" height="16"><use href="#b-geard"/></svg>
<div style="left:1171px;top:772px;width:232px;height:43.6px;border:1px solid #2e2e2e;"></div>
<div style="left:1172px;top:773px;width:66.4px;height:41.6px;background:linear-gradient(#2a2a2a,#3b3b3b 55%,#2e2e2e);"></div>
<div style="left:1175px;top:775.5px;font-size:13px;line-height:20px;color:#fff;white-space:nowrap;letter-spacing:-0.545px;">Edit mode:</div>
<div style="left:1181px;top:792.7px;font-size:13px;line-height:20px;color:#fff;white-space:nowrap;font-weight:700;letter-spacing:-0.661px;">click cell</div>
<div style="left:1239.4px;top:777px;width:37.6px;height:33.6px;background:linear-gradient(#313131,#272727);border-radius:4px;box-shadow:0 0 0 1px #3a3a3a inset;"></div>
<svg style="left:1250.2px;top:785.8px;" width="16" height="16"><use href="#b-grid1"/></svg>
<div style="left:1279.4px;top:777px;width:37.6px;height:33.6px;background:linear-gradient(#313131,#272727);border-radius:4px;box-shadow:0 0 0 1px #3a3a3a inset;"></div>
<svg style="left:1290.2px;top:785.8px;" width="16" height="16"><use href="#b-grid2"/></svg>
<div style="left:1319.2px;top:777px;width:37.6px;height:33.6px;background:#2b62c8;border-radius:4px;box-shadow:0 0 0 1px #4a80e0 inset;"></div>
<svg style="left:1330.0px;top:785.8px;" width="16" height="16"><use href="#b-grid3"/></svg>
<div style="left:1359.2px;top:777px;width:37.6px;height:33.6px;background:linear-gradient(#313131,#272727);border-radius:4px;box-shadow:0 0 0 1px #3a3a3a inset;"></div>
<svg style="left:1370.0px;top:785.8px;" width="16" height="16"><use href="#b-check"/></svg>
<div style="left:1412px;top:772px;width:206.4px;height:43.6px;border:1px solid #2e2e2e;"></div>
<div style="left:1413px;top:773px;width:84.4px;height:41.6px;background:linear-gradient(#2a2a2a,#3b3b3b 55%,#2e2e2e);"></div>
<div style="left:1416.2px;top:775.5px;font-size:13px;line-height:20px;color:#fff;white-space:nowrap;letter-spacing:-0.605px;">Display mode:</div>
<div style="left:1445.6px;top:792.7px;font-size:13px;line-height:20px;color:#fff;white-space:nowrap;font-weight:700;letter-spacing:-0.173px;">full</div>
<div style="left:1498.4px;top:777px;width:37.6px;height:33.6px;background:#2b62c8;border-radius:4px;box-shadow:0 0 0 1px #4a80e0 inset;"></div>
<svg style="left:1509.2px;top:785.8px;" width="16" height="16"><use href="#b-disp1"/></svg>
<div style="left:1538.4px;top:777px;width:37.6px;height:33.6px;background:linear-gradient(#313131,#272727);border-radius:4px;box-shadow:0 0 0 1px #3a3a3a inset;"></div>
<svg style="left:1549.2px;top:785.8px;" width="16" height="16"><use href="#b-disp2"/></svg>
<div style="left:1578.2px;top:777px;width:37.6px;height:33.6px;background:linear-gradient(#313131,#272727);border-radius:4px;box-shadow:0 0 0 1px #3a3a3a inset;"></div>
<svg style="left:1589.0px;top:785.8px;" width="16" height="16"><use href="#b-disp3"/></svg>
<div style="left:837.4px;top:846px;font-size:10.05px;line-height:13px;color:#fff;white-space:nowrap;letter-spacing:-.02px">Copyright © 2012 <i style="color:#8a8a8a">O</i><span style="color:#f5c542;margin-left:-1.6px">O</span><span style="color:#5bbde4;margin-left:-1.6px">O</span><span style="color:#8a8a8a">NA.NET</span> ltd. All rights reserved.</div>
<div style="left:308px;top:75px;width:231px;height:455px;z-index:20;background:#575757;border-right:1px solid #464646;border-left:1px solid #404040;"></div>
<div style="left:308px;top:499.4px;width:231px;height:31px;z-index:21;background:#2b62c8;"></div>
<svg style="left:316px;top:83.1px;z-index:22;" width="16" height="16"><use href="#m-price"/></svg>
<div style="left:336.3px;top:81.4px;font-size:13px;line-height:20px;color:#fff;white-space:nowrap;letter-spacing:-0.438px;z-index:22;">Price lists &amp; Workflow templates</div>
<svg style="left:524.4px;top:86.8px;z-index:22" width="6" height="9" viewBox="0 0 6 9"><path d="M0 0V9L6 4.5Z" fill="#fff"/></svg>
<svg style="left:316px;top:114.1px;z-index:22;" width="16" height="16"><use href="#m-rolodex"/></svg>
<div style="left:336.3px;top:112.4px;font-size:13px;line-height:20px;color:#fff;white-space:nowrap;letter-spacing:-0.629px;z-index:22;">Rolodex tables</div>
<svg style="left:524.4px;top:117.8px;z-index:22" width="6" height="9" viewBox="0 0 6 9"><path d="M0 0V9L6 4.5Z" fill="#fff"/></svg>
<svg style="left:316px;top:145.1px;z-index:22;" width="16" height="16"><use href="#m-msg"/></svg>
<div style="left:336.3px;top:143.4px;font-size:13px;line-height:20px;color:#fff;white-space:nowrap;letter-spacing:-0.969px;z-index:22;">Messages</div>
<svg style="left:524.4px;top:148.8px;z-index:22" width="6" height="9" viewBox="0 0 6 9"><path d="M0 0V9L6 4.5Z" fill="#fff"/></svg>
<svg style="left:316px;top:176.1px;z-index:22;" width="16" height="16"><use href="#m-dash"/></svg>
<div style="left:336.3px;top:174.4px;font-size:13px;line-height:20px;color:#fff;white-space:nowrap;letter-spacing:-0.678px;z-index:22;">Dashboard</div>
<svg style="left:316px;top:207.1px;z-index:22;" width="16" height="16"><use href="#m-sentmail"/></svg>
<div style="left:336.3px;top:205.4px;font-size:13px;line-height:20px;color:#fff;white-space:nowrap;letter-spacing:-0.577px;z-index:22;">Sent mail</div>
<svg style="left:316px;top:238.1px;z-index:22;" width="16" height="16"><use href="#m-filedeliv"/></svg>
<div style="left:336.3px;top:236.4px;font-size:13px;line-height:20px;color:#fff;white-space:nowrap;letter-spacing:-0.543px;z-index:22;">File delivery</div>
<svg style="left:316px;top:269.1px;z-index:22;" width="16" height="16"><use href="#m-filedl"/></svg>
<div style="left:336.3px;top:267.4px;font-size:13px;line-height:20px;color:#fff;white-space:nowrap;letter-spacing:-0.464px;z-index:22;">File download by agent</div>
<svg style="left:316px;top:300.1px;z-index:22;" width="16" height="16"><use href="#m-orderstatus"/></svg>
<div style="left:336.3px;top:298.4px;font-size:13px;line-height:20px;color:#fff;white-space:nowrap;letter-spacing:-0.505px;z-index:22;">Order status update</div>
<svg style="left:316px;top:331.1px;z-index:22;" width="16" height="16"><use href="#m-resrep"/></svg>
<div style="left:336.3px;top:329.4px;font-size:13px;line-height:20px;color:#fff;white-space:nowrap;letter-spacing:-0.547px;z-index:22;">Resource report irregulars</div>
<svg style="left:316px;top:362.1px;z-index:22;" width="16" height="16"><use href="#m-unitreq"/></svg>
<div style="left:336.3px;top:360.4px;font-size:13px;line-height:20px;color:#fff;white-space:nowrap;letter-spacing:-0.342px;z-index:22;">Unit reporting requirements</div>
<svg style="left:316px;top:393.1px;z-index:22;" width="16" height="16"><use href="#m-tasktypes"/></svg>
<div style="left:336.3px;top:391.4px;font-size:13px;line-height:20px;color:#fff;white-space:nowrap;letter-spacing:-0.781px;z-index:22;">Task types</div>
<svg style="left:316px;top:434.1px;z-index:22;" width="16" height="16"><use href="#m-users"/></svg>
<div style="left:336.3px;top:432.4px;font-size:13px;line-height:20px;color:#fff;white-space:nowrap;letter-spacing:-0.646px;z-index:22;">Users online</div>
<svg style="left:316px;top:475.1px;z-index:22;" width="16" height="16"><use href="#m-watch"/></svg>
<div style="left:336.3px;top:473.4px;font-size:13px;line-height:20px;color:#fff;white-space:nowrap;letter-spacing:-0.418px;z-index:22;">Watch folder files</div>
<svg style="left:316px;top:506.1px;z-index:22;" width="16" height="16"><use href="#m-reports"/></svg>
<div style="left:336.3px;top:504.4px;font-size:13px;line-height:20px;color:#fff;white-space:nowrap;letter-spacing:-0.789px;z-index:22;">Reports</div>
<svg style="left:524.4px;top:509.8px;z-index:22" width="6" height="9" viewBox="0 0 6 9"><path d="M0 0V9L6 4.5Z" fill="#fff"/></svg>
<div style="left:336px;top:420.2px;width:171px;height:1.6px;z-index:22;background:#6a6a6a;"></div>
<div style="left:336px;top:461.2px;width:171px;height:1.6px;z-index:22;background:#6a6a6a;"></div>
<div style="left:307px;top:40.9px;width:107.1px;height:37.1px;z-index:30;border:4.2px solid #1da02e;background:linear-gradient(#363636,#2c2c2c);box-shadow:0 0 3px rgba(0,0,0,.5),inset 0 0 4px rgba(0,0,0,.4);"></div>
<div style="left:303.6px;top:495.9px;width:237.5px;height:38.9px;z-index:42;border:4.2px solid #1da02e;box-shadow:0 0 4px rgba(0,0,0,.55),inset 0 2px 4px rgba(0,0,0,.45),inset 0 0 3px rgba(0,0,0,.3);"></div>
<div style="left:307px;top:529.4px;width:231.6px;height:1.4px;z-index:41;background:#2a2a30;"></div>
<div style="left:539.4px;top:485px;width:289px;height:380px;z-index:40;background:#595959;border:1px solid #2e2e2e;border-left-color:#3c3c3c;"></div>
<svg style="left:548px;top:494.0px;z-index:43;" width="16" height="16"><use href="#s-pl"/></svg>
<div style="left:568px;top:491.6px;font-size:13px;line-height:20px;color:#fff;white-space:nowrap;letter-spacing:-0.433px;z-index:43;">Profit and loss reports</div>
<svg style="left:548px;top:525.0px;z-index:43;" width="16" height="16"><use href="#s-plres"/></svg>
<div style="left:568px;top:522.6px;font-size:13px;line-height:20px;color:#fff;white-space:nowrap;letter-spacing:-0.412px;z-index:43;">Profit and loss report - by resource</div>
<svg style="left:548px;top:556.0px;z-index:43;" width="16" height="16"><use href="#s-open"/></svg>
<div style="left:568px;top:553.6px;font-size:13px;line-height:20px;color:#fff;white-space:nowrap;letter-spacing:-0.484px;z-index:43;">Open tasks report</div>
<svg style="left:548px;top:587.0px;z-index:43;" width="16" height="16"><use href="#s-periodic"/></svg>
<div style="left:568px;top:584.6px;font-size:13px;line-height:20px;color:#fff;white-space:nowrap;letter-spacing:-0.444px;z-index:43;">Periodic comparison report</div>
<svg style="left:548px;top:618.0px;z-index:43;" width="16" height="16"><use href="#s-eff"/></svg>
<div style="left:568px;top:615.6px;font-size:13px;line-height:20px;color:#fff;white-space:nowrap;letter-spacing:-0.422px;z-index:43;">Efficiency report</div>
<svg style="left:548px;top:649.0px;z-index:43;" width="16" height="16"><use href="#s-eff"/></svg>
<div style="left:568px;top:646.6px;font-size:13px;line-height:20px;color:#fff;white-space:nowrap;letter-spacing:-0.451px;z-index:43;">Efficiency report - Time conversion</div>
<svg style="left:548px;top:680.0px;z-index:43;" width="16" height="16"><use href="#s-close"/></svg>
<div style="left:568px;top:677.6px;font-size:13px;line-height:20px;color:#fff;white-space:nowrap;letter-spacing:-0.365px;z-index:43;">Close order pricing report</div>
<svg style="left:548px;top:711.0px;z-index:43;" width="16" height="16"><use href="#s-target"/></svg>
<div style="left:568px;top:708.6px;font-size:13px;line-height:20px;color:#fff;white-space:nowrap;letter-spacing:-0.401px;z-index:43;">Target income report</div>
<svg style="left:548px;top:742.0px;z-index:43;" width="16" height="16"><use href="#s-oper"/></svg>
<div style="left:568px;top:739.6px;font-size:13px;line-height:20px;color:#fff;white-space:nowrap;letter-spacing:-0.221px;z-index:43;">Operating profit report</div>
<svg style="left:548px;top:773.0px;z-index:43;" width="16" height="16"><use href="#s-unit"/></svg>
<div style="left:568px;top:770.6px;font-size:13px;line-height:20px;color:#fff;white-space:nowrap;letter-spacing:-0.210px;z-index:43;">Unit reporting report</div>
<svg style="left:548px;top:804.0px;z-index:43;" width="16" height="16"><use href="#s-log"/></svg>
<div style="left:568px;top:801.6px;font-size:13px;line-height:20px;color:#fff;white-space:nowrap;letter-spacing:-0.545px;z-index:43;">Consolidated orders and tasks changes log</div>
<svg style="left:548px;top:835.0px;z-index:43;" width="16" height="16"><use href="#s-log"/></svg>
<div style="left:568px;top:832.6px;font-size:13px;line-height:20px;color:#fff;white-space:nowrap;letter-spacing:-0.429px;z-index:43;">Download logs</div>
<div style="left:538px;top:792px;width:290.3px;height:39.6px;z-index:44;border:4.2px solid #1da02e;box-shadow:0 0 4px rgba(0,0,0,.55),inset 0 0 5px rgba(0,0,0,.5);"></div>
<svg style="left:493.2px;top:511.6px;z-index:41" width="17.6" height="24" viewBox="0 0 17.6 24"><path d="M6.2 23.4L1.4 15.6C.4 14 2 12.6 3.4 13.8L5.4 15.8V2.4C5.4 .2 8.6 .2 8.6 2.4V9.4C8.6 7.6 11.4 7.8 11.4 9.6V10.4C11.4 8.8 14 9 14 10.8V11.6C14 10.2 16.8 10.4 16.8 12.4V17.6C16.8 19.6 16.4 21.6 15.6 23.4Z" fill="#fff" stroke="#111" stroke-width="1.2" stroke-linejoin="round"/><path d="M8.6 10V14.6M11.4 11V14.6M14 12V14.8" stroke="#111" stroke-width=".9"/></svg>
</div>
</body></html>
